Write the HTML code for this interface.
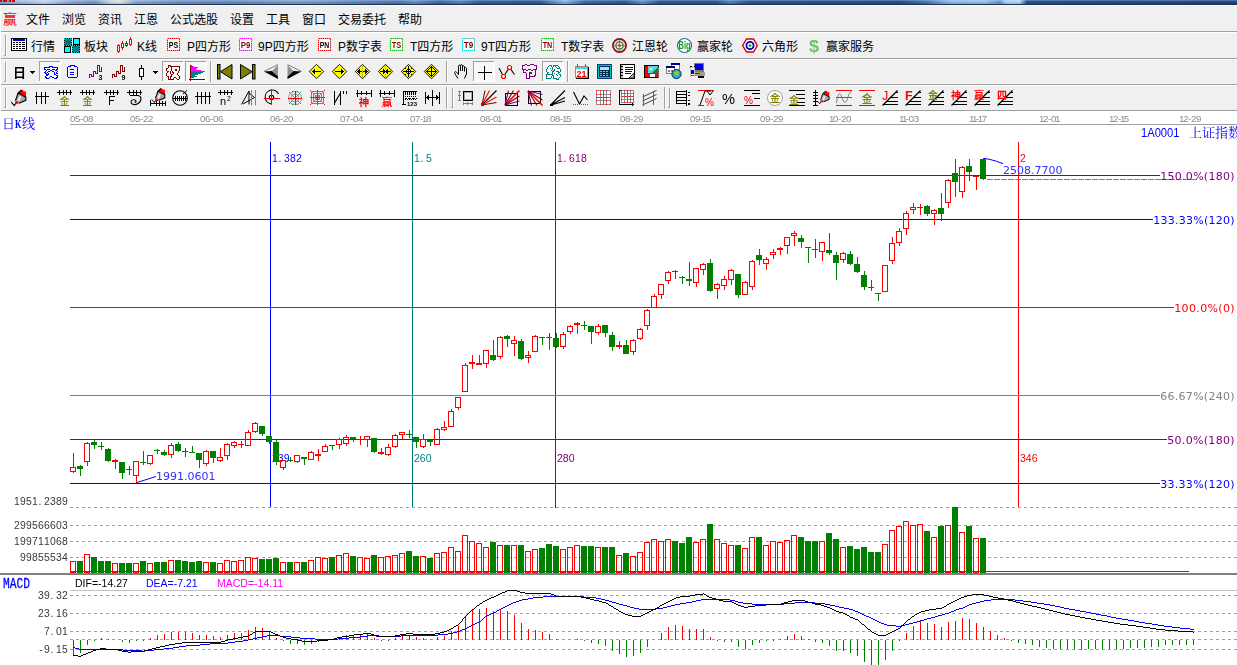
<!DOCTYPE html><html><head><meta charset="utf-8"><title>赢家江恩 - 上证指数 日K线</title>
<style>
html,body{margin:0;padding:0;background:#fff}
body{width:1237px;height:665px;overflow:hidden;position:relative;font-family:'Liberation Sans','Noto Sans CJK SC',sans-serif;font-size:12px;color:#000}
#strip{position:absolute;left:0;top:0;width:1237px;height:4px;background:linear-gradient(180deg,rgba(255,255,255,.35) 0,rgba(255,255,255,.12) 1px,rgba(255,255,255,0) 2px,rgba(0,0,30,.12) 4px),linear-gradient(90deg,#86a3cf 0px,#a9c0de 30px,#c3d4e8 45px,#8aa7cf 70px,#7193c4 95px,#c2d6d4 110px,#d5e2da 120px,#86a6cf 135px,#6a8fc3 180px,#6288be 230px,#779bcb 300px,#5a83bb 360px,#4a75b0 400px,#5f8cc4 415px,#35649f 440px,#4f82be 460px,#2c5c9a 480px,#2a5894 540px,#7fb2e4 565px,#3465a3 585px,#28568f 625px,#5a8fc8 642px,#28568f 660px,#265490 715px,#4a7fb9 730px,#255290 750px,#1f4c88 900px,#3a70ae 925px,#86b6e6 950px,#8fbfee 985px,#5d93cc 1000px,#a4cdf2 1006px,#a8d0f4 1020px,#1e4d8c 1027px,#1a4380 1237px)}
#strip2{position:absolute;left:0;top:4px;width:1237px;height:1px;background:#22304f}
#stripred{position:absolute;left:0;top:0;width:15px;height:2px;background:repeating-linear-gradient(90deg,#e00000 0 2px,#7f9fcf 2px 3px,#e00000 3px 7px,#7f9fcf 7px 9px)}
#menubar{position:absolute;left:0;top:5px;width:1237px;height:26px;background:#f0f0f0;border-top:1px solid #fcfcfc;box-sizing:border-box}
.tbrow{position:absolute;left:0;width:1237px;background:#f0f0f0;border-top:1px solid #a0a0a0;box-sizing:border-box;box-shadow:inset 0 1px 0 #fff}
.lbl{position:absolute;white-space:nowrap;line-height:14px;height:14px}
#logo{position:absolute;left:3px;top:9px;font-family:'Liberation Sans','Noto Sans CJK SC',sans-serif;font-size:14px;line-height:18px;color:#f2000c}
#chart,#ui{will-change:transform}
#leftedge{position:absolute;left:0;top:5px;width:1px;height:106px;background:#fff}
</style></head><body>
<div id="strip"></div><div id="stripred"></div><div id="strip2"></div>
<div id="menubar"><span id="logo" style="top:4px">赢</span>
<span class="lbl" style="left:26px;top:7px">文件</span>
<span class="lbl" style="left:62px;top:7px">浏览</span>
<span class="lbl" style="left:98px;top:7px">资讯</span>
<span class="lbl" style="left:134px;top:7px">江恩</span>
<span class="lbl" style="left:170px;top:7px">公式选股</span>
<span class="lbl" style="left:230px;top:7px">设置</span>
<span class="lbl" style="left:266px;top:7px">工具</span>
<span class="lbl" style="left:302px;top:7px">窗口</span>
<span class="lbl" style="left:338px;top:7px">交易委托</span>
<span class="lbl" style="left:398px;top:7px">帮助</span>
</div>
<div class="tbrow" style="top:31px;height:27px">
<span class="lbl" style="left:31px;top:8px">行情</span>
<span class="lbl" style="left:84px;top:8px">板块</span>
<span class="lbl" style="left:137px;top:8px">K线</span>
<span class="lbl" style="left:187px;top:8px">P四方形</span>
<span class="lbl" style="left:258px;top:8px">9P四方形</span>
<span class="lbl" style="left:338px;top:8px">P数字表</span>
<span class="lbl" style="left:410px;top:8px">T四方形</span>
<span class="lbl" style="left:481px;top:8px">9T四方形</span>
<span class="lbl" style="left:561px;top:8px">T数字表</span>
<span class="lbl" style="left:632px;top:8px">江恩轮</span>
<span class="lbl" style="left:697px;top:8px">赢家轮</span>
<span class="lbl" style="left:762px;top:8px">六角形</span>
<span class="lbl" style="left:826px;top:8px">赢家服务</span>
</div>
<div class="tbrow" style="top:58px;height:26px"></div>
<div class="tbrow" style="top:84px;height:26px"></div>
<div class="tbrow" style="top:110px;height:1px;background:#a0a0a0;box-shadow:none"></div>
<div id="leftedge"></div>
<svg id="chart" width="1237" height="665" viewBox="0 0 1237 665" style="position:absolute;left:0;top:0" shape-rendering="crispEdges">
<rect x="0" y="111" width="1237" height="554" fill="#fff"/>
<rect x="70" y="124" width="1167" height="1" fill="#a0a0a0"/>
<g font-family="'Liberation Sans',sans-serif" font-size="9.7px" fill="#8c8c8c" shape-rendering="auto">
<text x="70.0 75.0 80.0 83.0 88.0" y="122">05-08</text>
<text x="130.0 135.0 140.0 143.0 148.0" y="122">05-22</text>
<text x="200.0 205.0 210.0 213.0 218.0" y="122">06-06</text>
<text x="270.0 275.0 280.0 283.0 288.0" y="122">06-20</text>
<text x="340.0 345.0 350.0 353.0 358.0" y="122">07-04</text>
<text x="410.0 415.0 420.0 422.0 425.9" y="122">07-18</text>
<text x="480.0 485.0 490.0 493.0 497.0" y="122">08-01</text>
<text x="550.0 555.0 560.0 562.0 565.9" y="122">08-15</text>
<text x="620.0 625.0 630.0 633.0 638.0" y="122">08-29</text>
<text x="690.0 695.0 700.0 702.0 705.9" y="122">09-15</text>
<text x="760.0 765.0 770.0 773.0 778.0" y="122">09-29</text>
<text x="829.0 832.9 837.9 840.9 845.9" y="122">10-20</text>
<text x="899.0 901.9 905.8 908.8 913.8" y="122">11-03</text>
<text x="969.0 971.9 975.8 977.8 981.7" y="122">11-17</text>
<text x="1039.0 1042.9 1047.9 1050.9 1054.9" y="122">12-01</text>
<text x="1109.0 1112.9 1117.9 1119.9 1123.8" y="122">12-15</text>
<text x="1179.0 1182.9 1187.9 1190.9 1195.9" y="122">12-29</text>
</g>
<rect x="270" y="142" width="1" height="366" fill="#0000ff"/>
<rect x="412" y="142" width="1" height="366" fill="#008080"/>
<rect x="555" y="142" width="1" height="366" fill="#800080"/>
<rect x="1018" y="142" width="1" height="366" fill="#ff0000"/>
<rect x="70" y="175" width="1090" height="1" fill="#800080"/>
<rect x="70" y="219" width="1083" height="1" fill="#0000ff"/>
<rect x="70" y="307" width="1104" height="1" fill="#ff0000"/>
<rect x="70" y="395" width="1090" height="1" fill="#808080"/>
<rect x="70" y="439" width="1097" height="1" fill="#800080"/>
<rect x="70" y="483" width="1090" height="1" fill="#0000ff"/>
<line x1="987" y1="179.5" x2="1196" y2="179.5" stroke="#808080" stroke-dasharray="6 1"/>
<line x1="70" y1="507.5" x2="1237" y2="507.5" stroke="#a0a0a0" stroke-dasharray="3 3"/>
<line x1="70" y1="525.5" x2="1237" y2="525.5" stroke="#a0a0a0" stroke-dasharray="3 3"/>
<line x1="70" y1="541.5" x2="1237" y2="541.5" stroke="#a0a0a0" stroke-dasharray="3 3"/>
<line x1="70" y1="557.5" x2="1237" y2="557.5" stroke="#a0a0a0" stroke-dasharray="3 3"/>
<g shape-rendering="auto">
<text x="272.1 278.6 284.1 290.1 296.1" y="162" font-family="'Liberation Sans','Noto Serif CJK SC',sans-serif" font-size="10.4px" fill="#0000ff">1.382</text>
<text x="414.1 420.6 426.1" y="162" font-family="'Liberation Sans','Noto Serif CJK SC',sans-serif" font-size="10.4px" fill="#008080">1.5</text>
<text x="557.1 563.6 569.1 575.1 581.1" y="162" font-family="'Liberation Sans','Noto Serif CJK SC',sans-serif" font-size="10.4px" fill="#800080">1.618</text>
<g font-family="'Liberation Sans',sans-serif" font-size="10.5px">
<text x="1020" y="162" fill="#ff0000">2</text>
<text x="272" y="462" fill="#0000ff">239</text>
<text x="414" y="462" fill="#008080">260</text>
<text x="557" y="462" fill="#800080">280</text>
<text x="1020" y="462" fill="#ff0000">346</text>
</g>
<g font-family="'DejaVu Sans','Liberation Sans',sans-serif" font-size="11px">
<text x="1160.2" y="179.6" fill="#800080" textLength="74.4" lengthAdjust="spacing">150.0%(180)</text>
<text x="1153.2" y="223.6" fill="#0000ff" textLength="81.4" lengthAdjust="spacing">133.33%(120)</text>
<text x="1174.2" y="311.6" fill="#ff0000" textLength="60.4" lengthAdjust="spacing">100.0%(0)</text>
<text x="1160.2" y="399.6" fill="#808080" textLength="74.4" lengthAdjust="spacing">66.67%(240)</text>
<text x="1167.2" y="443.6" fill="#800080" textLength="67.4" lengthAdjust="spacing">50.0%(180)</text>
<text x="1160.2" y="487.6" fill="#0000ff" textLength="74.4" lengthAdjust="spacing">33.33%(120)</text>
</g>
<g font-family="'DejaVu Sans','Liberation Sans',sans-serif" font-size="11px" fill="#3030ff">
<text x="1003" y="173.6">2508.7700</text>
<text x="156" y="480">1991.0601</text>
</g>
<path d="M983.5 158.4 L989 159.2 L996.6 161.3 L1003 163.6" fill="none" stroke="#0000ff" stroke-width="1"/>
<path d="M137 482.5 L156 476.5" fill="none" stroke="#0000ff" stroke-width="1"/>
</g>
<g shape-rendering="auto">
<text x="2 22" y="128.3" font-family="'Liberation Serif','Noto Serif CJK SC',serif" font-size="13px" fill="#0000ff">日线</text>
<text x="15" y="128" font-family="'Liberation Serif',serif" font-size="12.5px" font-weight="bold" fill="#0000ff" textLength="6.4" lengthAdjust="spacingAndGlyphs">K</text>
<text x="1141" y="137" font-family="'Liberation Sans',sans-serif" font-size="13.5px" fill="#0000ff" textLength="38.5" lengthAdjust="spacingAndGlyphs">1A0001</text>
<text x="1189 1202 1215 1228" y="137" font-family="'Liberation Serif','Noto Serif CJK SC',serif" font-size="13px" fill="#0000ff">上证指数</text>
</g>
<rect x="73" y="453" width="1" height="14" fill="#ff0000"/>
<rect x="73" y="472" width="1" height="1" fill="#ff0000"/>
<rect x="70.5" y="467.5" width="5" height="4" fill="none" stroke="#ff0000"/>
<rect x="80" y="465" width="1" height="11" fill="#008000"/>
<rect x="77" y="466" width="6" height="3" fill="#008000"/>
<rect x="87" y="442" width="1" height="1" fill="#ff0000"/>
<rect x="87" y="462" width="1" height="4" fill="#ff0000"/>
<rect x="84.5" y="443.5" width="5" height="18" fill="none" stroke="#ff0000"/>
<rect x="94" y="439" width="1" height="10" fill="#008000"/>
<rect x="91" y="442" width="6" height="3" fill="#008000"/>
<rect x="101" y="442" width="1" height="8" fill="#008000"/>
<rect x="98" y="446" width="6" height="1" fill="#008000"/>
<rect x="108" y="448" width="1" height="14" fill="#008000"/>
<rect x="105" y="449" width="6" height="12" fill="#008000"/>
<rect x="115" y="459" width="1" height="10" fill="#ff0000"/>
<rect x="112" y="460" width="6" height="2" fill="#ff0000"/>
<rect x="122" y="462" width="1" height="17" fill="#008000"/>
<rect x="119" y="462" width="6" height="11" fill="#008000"/>
<rect x="129" y="466" width="1" height="9" fill="#008000"/>
<rect x="126" y="469" width="6" height="1" fill="#008000"/>
<rect x="136" y="476" width="1" height="7" fill="#ff0000"/>
<rect x="133.5" y="461.5" width="5" height="14" fill="none" stroke="#ff0000"/>
<rect x="143" y="451" width="1" height="14" fill="#008000"/>
<rect x="140" y="462" width="6" height="1" fill="#008000"/>
<rect x="150" y="464" width="1" height="1" fill="#ff0000"/>
<rect x="147.5" y="455.5" width="5" height="8" fill="none" stroke="#ff0000"/>
<rect x="157" y="449" width="1" height="5" fill="#008000"/>
<rect x="154" y="450" width="6" height="1" fill="#008000"/>
<rect x="164" y="450" width="1" height="6" fill="#008000"/>
<rect x="161" y="452" width="6" height="3" fill="#008000"/>
<rect x="171" y="443" width="1" height="2" fill="#ff0000"/>
<rect x="171" y="455" width="1" height="3" fill="#ff0000"/>
<rect x="168.5" y="445.5" width="5" height="9" fill="none" stroke="#ff0000"/>
<rect x="178" y="442" width="1" height="10" fill="#008000"/>
<rect x="175" y="444" width="6" height="7" fill="#008000"/>
<rect x="185" y="448" width="1" height="9" fill="#008000"/>
<rect x="182" y="451" width="6" height="1" fill="#008000"/>
<rect x="192" y="446" width="1" height="7" fill="#008000"/>
<rect x="189" y="452" width="6" height="1" fill="#008000"/>
<rect x="199" y="453" width="1" height="15" fill="#008000"/>
<rect x="196" y="453" width="6" height="7" fill="#008000"/>
<rect x="206" y="450" width="1" height="1" fill="#ff0000"/>
<rect x="206" y="464" width="1" height="2" fill="#ff0000"/>
<rect x="203.5" y="451.5" width="5" height="12" fill="none" stroke="#ff0000"/>
<rect x="213" y="451" width="1" height="12" fill="#008000"/>
<rect x="210" y="451" width="6" height="7" fill="#008000"/>
<rect x="220" y="448" width="1" height="9" fill="#ff0000"/>
<rect x="220" y="461" width="1" height="1" fill="#ff0000"/>
<rect x="217.5" y="457.5" width="5" height="3" fill="none" stroke="#ff0000"/>
<rect x="227" y="443" width="1" height="1" fill="#ff0000"/>
<rect x="227" y="456" width="1" height="4" fill="#ff0000"/>
<rect x="224.5" y="444.5" width="5" height="11" fill="none" stroke="#ff0000"/>
<rect x="234" y="441" width="1" height="1" fill="#ff0000"/>
<rect x="234" y="446" width="1" height="2" fill="#ff0000"/>
<rect x="231.5" y="442.5" width="5" height="3" fill="none" stroke="#ff0000"/>
<rect x="241" y="441" width="1" height="7" fill="#ff0000"/>
<rect x="238" y="444" width="6" height="1" fill="#ff0000"/>
<rect x="248" y="430" width="1" height="2" fill="#ff0000"/>
<rect x="245.5" y="432.5" width="5" height="13" fill="none" stroke="#ff0000"/>
<rect x="255" y="422" width="1" height="1" fill="#ff0000"/>
<rect x="255" y="432" width="1" height="1" fill="#ff0000"/>
<rect x="252.5" y="423.5" width="5" height="8" fill="none" stroke="#ff0000"/>
<rect x="262" y="426" width="1" height="10" fill="#008000"/>
<rect x="259" y="426" width="6" height="8" fill="#008000"/>
<rect x="269" y="436" width="1" height="8" fill="#008000"/>
<rect x="266" y="436" width="6" height="6" fill="#008000"/>
<rect x="276" y="440" width="1" height="25" fill="#008000"/>
<rect x="273" y="442" width="6" height="20" fill="#008000"/>
<rect x="283" y="468" width="1" height="2" fill="#ff0000"/>
<rect x="280.5" y="460.5" width="5" height="7" fill="none" stroke="#ff0000"/>
<rect x="290" y="457" width="1" height="5" fill="#008000"/>
<rect x="287" y="460" width="6" height="1" fill="#008000"/>
<rect x="297" y="462" width="1" height="1" fill="#ff0000"/>
<rect x="294.5" y="455.5" width="5" height="6" fill="none" stroke="#ff0000"/>
<rect x="304" y="457" width="1" height="8" fill="#008000"/>
<rect x="301" y="457" width="6" height="2" fill="#008000"/>
<rect x="311" y="451" width="1" height="1" fill="#ff0000"/>
<rect x="308.5" y="452.5" width="5" height="7" fill="none" stroke="#ff0000"/>
<rect x="318" y="449" width="1" height="12" fill="#ff0000"/>
<rect x="315" y="454" width="6" height="2" fill="#ff0000"/>
<rect x="325" y="444" width="1" height="2" fill="#ff0000"/>
<rect x="322.5" y="446.5" width="5" height="5" fill="none" stroke="#ff0000"/>
<rect x="332" y="445" width="1" height="5" fill="#008000"/>
<rect x="329" y="445" width="6" height="1" fill="#008000"/>
<rect x="339" y="438" width="1" height="1" fill="#ff0000"/>
<rect x="339" y="445" width="1" height="4" fill="#ff0000"/>
<rect x="336.5" y="439.5" width="5" height="5" fill="none" stroke="#ff0000"/>
<rect x="346" y="435" width="1" height="2" fill="#ff0000"/>
<rect x="346" y="444" width="1" height="2" fill="#ff0000"/>
<rect x="343.5" y="437.5" width="5" height="6" fill="none" stroke="#ff0000"/>
<rect x="353" y="437" width="1" height="5" fill="#008000"/>
<rect x="350" y="437" width="6" height="2" fill="#008000"/>
<rect x="360" y="436" width="1" height="9" fill="#ff0000"/>
<rect x="357" y="439" width="6" height="1" fill="#ff0000"/>
<rect x="367" y="440" width="1" height="7" fill="#ff0000"/>
<rect x="364.5" y="436.5" width="5" height="3" fill="none" stroke="#ff0000"/>
<rect x="374" y="438" width="1" height="15" fill="#008000"/>
<rect x="371" y="438" width="6" height="14" fill="#008000"/>
<rect x="381" y="448" width="1" height="7" fill="#ff0000"/>
<rect x="378" y="452" width="6" height="2" fill="#ff0000"/>
<rect x="388" y="444" width="1" height="3" fill="#ff0000"/>
<rect x="388" y="455" width="1" height="1" fill="#ff0000"/>
<rect x="385.5" y="447.5" width="5" height="7" fill="none" stroke="#ff0000"/>
<rect x="395" y="434" width="1" height="1" fill="#ff0000"/>
<rect x="395" y="447" width="1" height="1" fill="#ff0000"/>
<rect x="392.5" y="435.5" width="5" height="11" fill="none" stroke="#ff0000"/>
<rect x="402" y="435" width="1" height="4" fill="#ff0000"/>
<rect x="399.5" y="432.5" width="5" height="2" fill="none" stroke="#ff0000"/>
<rect x="409" y="430" width="1" height="8" fill="#008000"/>
<rect x="406" y="434" width="6" height="1" fill="#008000"/>
<rect x="416" y="437" width="1" height="11" fill="#008000"/>
<rect x="413" y="437" width="6" height="5" fill="#008000"/>
<rect x="423" y="434" width="1" height="5" fill="#ff0000"/>
<rect x="423" y="447" width="1" height="1" fill="#ff0000"/>
<rect x="420.5" y="439.5" width="5" height="7" fill="none" stroke="#ff0000"/>
<rect x="430" y="440" width="1" height="6" fill="#008000"/>
<rect x="427" y="440" width="6" height="2" fill="#008000"/>
<rect x="437" y="428" width="1" height="1" fill="#ff0000"/>
<rect x="434.5" y="429.5" width="5" height="15" fill="none" stroke="#ff0000"/>
<rect x="444" y="421" width="1" height="6" fill="#ff0000"/>
<rect x="444" y="430" width="1" height="1" fill="#ff0000"/>
<rect x="441.5" y="427.5" width="5" height="2" fill="none" stroke="#ff0000"/>
<rect x="451" y="409" width="1" height="2" fill="#ff0000"/>
<rect x="448.5" y="411.5" width="5" height="15" fill="none" stroke="#ff0000"/>
<rect x="458" y="408" width="1" height="2" fill="#ff0000"/>
<rect x="455.5" y="397.5" width="5" height="10" fill="none" stroke="#ff0000"/>
<rect x="465" y="363" width="1" height="2" fill="#ff0000"/>
<rect x="462.5" y="365.5" width="5" height="26" fill="none" stroke="#ff0000"/>
<rect x="472" y="355" width="1" height="14" fill="#ff0000"/>
<rect x="469" y="362" width="6" height="2" fill="#ff0000"/>
<rect x="479" y="355" width="1" height="10" fill="#ff0000"/>
<rect x="476" y="363" width="6" height="2" fill="#ff0000"/>
<rect x="486" y="364" width="1" height="4" fill="#ff0000"/>
<rect x="483.5" y="350.5" width="5" height="13" fill="none" stroke="#ff0000"/>
<rect x="493" y="340" width="1" height="21" fill="#008000"/>
<rect x="490" y="355" width="6" height="5" fill="#008000"/>
<rect x="500" y="336" width="1" height="1" fill="#ff0000"/>
<rect x="500" y="357" width="1" height="2" fill="#ff0000"/>
<rect x="497.5" y="337.5" width="5" height="19" fill="none" stroke="#ff0000"/>
<rect x="507" y="335" width="1" height="12" fill="#008000"/>
<rect x="504" y="336" width="6" height="3" fill="#008000"/>
<rect x="514" y="336" width="1" height="4" fill="#ff0000"/>
<rect x="514" y="344" width="1" height="12" fill="#ff0000"/>
<rect x="511.5" y="340.5" width="5" height="3" fill="none" stroke="#ff0000"/>
<rect x="521" y="339" width="1" height="21" fill="#008000"/>
<rect x="518" y="341" width="6" height="18" fill="#008000"/>
<rect x="528" y="351" width="1" height="4" fill="#ff0000"/>
<rect x="528" y="358" width="1" height="5" fill="#ff0000"/>
<rect x="525.5" y="355.5" width="5" height="2" fill="none" stroke="#ff0000"/>
<rect x="535" y="335" width="1" height="1" fill="#ff0000"/>
<rect x="532.5" y="336.5" width="5" height="15" fill="none" stroke="#ff0000"/>
<rect x="542" y="337" width="1" height="8" fill="#008000"/>
<rect x="539" y="337" width="6" height="1" fill="#008000"/>
<rect x="549" y="333" width="1" height="17" fill="#008000"/>
<rect x="546" y="337" width="6" height="1" fill="#008000"/>
<rect x="556" y="333" width="1" height="15" fill="#008000"/>
<rect x="553" y="338" width="6" height="9" fill="#008000"/>
<rect x="563" y="332" width="1" height="2" fill="#ff0000"/>
<rect x="563" y="347" width="1" height="2" fill="#ff0000"/>
<rect x="560.5" y="334.5" width="5" height="12" fill="none" stroke="#ff0000"/>
<rect x="570" y="325" width="1" height="1" fill="#ff0000"/>
<rect x="570" y="332" width="1" height="2" fill="#ff0000"/>
<rect x="567.5" y="326.5" width="5" height="5" fill="none" stroke="#ff0000"/>
<rect x="577" y="322" width="1" height="12" fill="#ff0000"/>
<rect x="574" y="323" width="6" height="2" fill="#ff0000"/>
<rect x="584" y="321" width="1" height="9" fill="#008000"/>
<rect x="581" y="325" width="6" height="1" fill="#008000"/>
<rect x="591" y="326" width="1" height="18" fill="#008000"/>
<rect x="588" y="326" width="6" height="6" fill="#008000"/>
<rect x="598" y="324" width="1" height="2" fill="#ff0000"/>
<rect x="598" y="333" width="1" height="2" fill="#ff0000"/>
<rect x="595.5" y="326.5" width="5" height="6" fill="none" stroke="#ff0000"/>
<rect x="605" y="325" width="1" height="12" fill="#008000"/>
<rect x="602" y="325" width="6" height="8" fill="#008000"/>
<rect x="612" y="332" width="1" height="19" fill="#008000"/>
<rect x="609" y="335" width="6" height="12" fill="#008000"/>
<rect x="619" y="341" width="1" height="8" fill="#ff0000"/>
<rect x="616" y="345" width="6" height="2" fill="#ff0000"/>
<rect x="626" y="340" width="1" height="14" fill="#008000"/>
<rect x="623" y="345" width="6" height="9" fill="#008000"/>
<rect x="633" y="339" width="1" height="1" fill="#ff0000"/>
<rect x="633" y="352" width="1" height="3" fill="#ff0000"/>
<rect x="630.5" y="340.5" width="5" height="11" fill="none" stroke="#ff0000"/>
<rect x="640" y="328" width="1" height="1" fill="#ff0000"/>
<rect x="640" y="339" width="1" height="1" fill="#ff0000"/>
<rect x="637.5" y="329.5" width="5" height="9" fill="none" stroke="#ff0000"/>
<rect x="647" y="309" width="1" height="1" fill="#ff0000"/>
<rect x="647" y="326" width="1" height="4" fill="#ff0000"/>
<rect x="644.5" y="310.5" width="5" height="15" fill="none" stroke="#ff0000"/>
<rect x="654" y="294" width="1" height="2" fill="#ff0000"/>
<rect x="651.5" y="296.5" width="5" height="11" fill="none" stroke="#ff0000"/>
<rect x="661" y="295" width="1" height="4" fill="#ff0000"/>
<rect x="658.5" y="284.5" width="5" height="10" fill="none" stroke="#ff0000"/>
<rect x="668" y="271" width="1" height="1" fill="#ff0000"/>
<rect x="668" y="281" width="1" height="3" fill="#ff0000"/>
<rect x="665.5" y="272.5" width="5" height="8" fill="none" stroke="#ff0000"/>
<rect x="675" y="270" width="1" height="9" fill="#008000"/>
<rect x="672" y="271" width="6" height="1" fill="#008000"/>
<rect x="682" y="276" width="1" height="8" fill="#008000"/>
<rect x="679" y="277" width="6" height="1" fill="#008000"/>
<rect x="689" y="262" width="1" height="24" fill="#008000"/>
<rect x="686" y="279" width="6" height="2" fill="#008000"/>
<rect x="696" y="283" width="1" height="4" fill="#ff0000"/>
<rect x="693.5" y="268.5" width="5" height="14" fill="none" stroke="#ff0000"/>
<rect x="703" y="263" width="1" height="1" fill="#ff0000"/>
<rect x="703" y="270" width="1" height="5" fill="#ff0000"/>
<rect x="700.5" y="264.5" width="5" height="5" fill="none" stroke="#ff0000"/>
<rect x="710" y="259" width="1" height="33" fill="#008000"/>
<rect x="707" y="263" width="6" height="28" fill="#008000"/>
<rect x="717" y="283" width="1" height="1" fill="#ff0000"/>
<rect x="717" y="289" width="1" height="10" fill="#ff0000"/>
<rect x="714.5" y="284.5" width="5" height="4" fill="none" stroke="#ff0000"/>
<rect x="724" y="276" width="1" height="3" fill="#ff0000"/>
<rect x="724" y="286" width="1" height="4" fill="#ff0000"/>
<rect x="721.5" y="279.5" width="5" height="6" fill="none" stroke="#ff0000"/>
<rect x="731" y="269" width="1" height="1" fill="#ff0000"/>
<rect x="731" y="280" width="1" height="5" fill="#ff0000"/>
<rect x="728.5" y="270.5" width="5" height="9" fill="none" stroke="#ff0000"/>
<rect x="738" y="274" width="1" height="24" fill="#008000"/>
<rect x="735" y="274" width="6" height="21" fill="#008000"/>
<rect x="745" y="281" width="1" height="1" fill="#ff0000"/>
<rect x="742.5" y="282.5" width="5" height="12" fill="none" stroke="#ff0000"/>
<rect x="752" y="260" width="1" height="1" fill="#ff0000"/>
<rect x="752" y="287" width="1" height="3" fill="#ff0000"/>
<rect x="749.5" y="261.5" width="5" height="25" fill="none" stroke="#ff0000"/>
<rect x="759" y="249" width="1" height="16" fill="#008000"/>
<rect x="756" y="255" width="6" height="5" fill="#008000"/>
<rect x="766" y="257" width="1" height="2" fill="#ff0000"/>
<rect x="766" y="264" width="1" height="6" fill="#ff0000"/>
<rect x="763.5" y="259.5" width="5" height="4" fill="none" stroke="#ff0000"/>
<rect x="773" y="249" width="1" height="3" fill="#ff0000"/>
<rect x="773" y="255" width="1" height="4" fill="#ff0000"/>
<rect x="770.5" y="252.5" width="5" height="2" fill="none" stroke="#ff0000"/>
<rect x="780" y="247" width="1" height="8" fill="#ff0000"/>
<rect x="777" y="248" width="6" height="2" fill="#ff0000"/>
<rect x="787" y="246" width="1" height="8" fill="#ff0000"/>
<rect x="784.5" y="237.5" width="5" height="8" fill="none" stroke="#ff0000"/>
<rect x="794" y="231" width="1" height="2" fill="#ff0000"/>
<rect x="794" y="236" width="1" height="10" fill="#ff0000"/>
<rect x="791.5" y="233.5" width="5" height="2" fill="none" stroke="#ff0000"/>
<rect x="801" y="235" width="1" height="13" fill="#008000"/>
<rect x="798" y="238" width="6" height="4" fill="#008000"/>
<rect x="808" y="247" width="1" height="16" fill="#008000"/>
<rect x="805" y="247" width="6" height="1" fill="#008000"/>
<rect x="815" y="239" width="1" height="19" fill="#008000"/>
<rect x="812" y="249" width="6" height="1" fill="#008000"/>
<rect x="822" y="252" width="1" height="9" fill="#ff0000"/>
<rect x="819.5" y="242.5" width="5" height="9" fill="none" stroke="#ff0000"/>
<rect x="829" y="233" width="1" height="22" fill="#008000"/>
<rect x="826" y="250" width="6" height="3" fill="#008000"/>
<rect x="836" y="252" width="1" height="28" fill="#008000"/>
<rect x="833" y="255" width="6" height="8" fill="#008000"/>
<rect x="843" y="252" width="1" height="1" fill="#ff0000"/>
<rect x="843" y="260" width="1" height="3" fill="#ff0000"/>
<rect x="840.5" y="253.5" width="5" height="6" fill="none" stroke="#ff0000"/>
<rect x="850" y="251" width="1" height="14" fill="#008000"/>
<rect x="847" y="254" width="6" height="10" fill="#008000"/>
<rect x="857" y="257" width="1" height="16" fill="#008000"/>
<rect x="854" y="264" width="6" height="8" fill="#008000"/>
<rect x="864" y="271" width="1" height="19" fill="#008000"/>
<rect x="861" y="275" width="6" height="12" fill="#008000"/>
<rect x="871" y="280" width="1" height="11" fill="#008000"/>
<rect x="868" y="287" width="6" height="1" fill="#008000"/>
<rect x="878" y="293" width="1" height="8" fill="#008000"/>
<rect x="875" y="293" width="6" height="1" fill="#008000"/>
<rect x="882.5" y="265.5" width="5" height="26" fill="none" stroke="#ff0000"/>
<rect x="892" y="237" width="1" height="6" fill="#ff0000"/>
<rect x="892" y="261" width="1" height="3" fill="#ff0000"/>
<rect x="889.5" y="243.5" width="5" height="17" fill="none" stroke="#ff0000"/>
<rect x="899" y="228" width="1" height="3" fill="#ff0000"/>
<rect x="899" y="243" width="1" height="3" fill="#ff0000"/>
<rect x="896.5" y="231.5" width="5" height="11" fill="none" stroke="#ff0000"/>
<rect x="906" y="211" width="1" height="2" fill="#ff0000"/>
<rect x="906" y="229" width="1" height="6" fill="#ff0000"/>
<rect x="903.5" y="213.5" width="5" height="15" fill="none" stroke="#ff0000"/>
<rect x="913" y="203" width="1" height="4" fill="#ff0000"/>
<rect x="913" y="210" width="1" height="4" fill="#ff0000"/>
<rect x="910.5" y="207.5" width="5" height="2" fill="none" stroke="#ff0000"/>
<rect x="920" y="204" width="1" height="11" fill="#ff0000"/>
<rect x="917" y="207" width="6" height="1" fill="#ff0000"/>
<rect x="927" y="205" width="1" height="11" fill="#008000"/>
<rect x="924" y="206" width="6" height="8" fill="#008000"/>
<rect x="934" y="209" width="1" height="1" fill="#ff0000"/>
<rect x="934" y="214" width="1" height="11" fill="#ff0000"/>
<rect x="931.5" y="210.5" width="5" height="3" fill="none" stroke="#ff0000"/>
<rect x="941" y="193" width="1" height="28" fill="#008000"/>
<rect x="938" y="208" width="6" height="6" fill="#008000"/>
<rect x="948" y="179" width="1" height="1" fill="#ff0000"/>
<rect x="948" y="203" width="1" height="5" fill="#ff0000"/>
<rect x="945.5" y="180.5" width="5" height="22" fill="none" stroke="#ff0000"/>
<rect x="955" y="159" width="1" height="38" fill="#008000"/>
<rect x="952" y="173" width="6" height="9" fill="#008000"/>
<rect x="962" y="166" width="1" height="1" fill="#ff0000"/>
<rect x="962" y="192" width="1" height="6" fill="#ff0000"/>
<rect x="959.5" y="167.5" width="5" height="24" fill="none" stroke="#ff0000"/>
<rect x="969" y="159" width="1" height="22" fill="#008000"/>
<rect x="966" y="166" width="6" height="6" fill="#008000"/>
<rect x="976" y="175" width="1" height="15" fill="#ff0000"/>
<rect x="973" y="176" width="6" height="1" fill="#ff0000"/>
<rect x="983" y="158" width="1" height="22" fill="#008000"/>
<rect x="980" y="159" width="6" height="20" fill="#008000"/>
<rect x="70" y="571" width="1119" height="1" fill="#ff0000"/>
<rect x="70.5" y="561.5" width="5" height="11" fill="none" stroke="#ff0000"/>
<rect x="77" y="561" width="6" height="12" fill="#008000"/>
<rect x="84.5" y="554.5" width="5" height="18" fill="none" stroke="#ff0000"/>
<rect x="91" y="557" width="6" height="16" fill="#008000"/>
<rect x="98" y="561" width="6" height="12" fill="#008000"/>
<rect x="105" y="561" width="6" height="12" fill="#008000"/>
<rect x="112.5" y="563.5" width="5" height="9" fill="none" stroke="#ff0000"/>
<rect x="119" y="563" width="6" height="10" fill="#008000"/>
<rect x="126" y="563" width="6" height="10" fill="#008000"/>
<rect x="133.5" y="563.5" width="5" height="9" fill="none" stroke="#ff0000"/>
<rect x="140" y="561" width="6" height="12" fill="#008000"/>
<rect x="147.5" y="563.5" width="5" height="9" fill="none" stroke="#ff0000"/>
<rect x="154" y="562" width="6" height="11" fill="#008000"/>
<rect x="161" y="562" width="6" height="11" fill="#008000"/>
<rect x="168.5" y="560.5" width="5" height="12" fill="none" stroke="#ff0000"/>
<rect x="175" y="560" width="6" height="13" fill="#008000"/>
<rect x="182" y="561" width="6" height="12" fill="#008000"/>
<rect x="189" y="562" width="6" height="11" fill="#008000"/>
<rect x="196" y="561" width="6" height="12" fill="#008000"/>
<rect x="203.5" y="562.5" width="5" height="10" fill="none" stroke="#ff0000"/>
<rect x="210" y="562" width="6" height="11" fill="#008000"/>
<rect x="217.5" y="563.5" width="5" height="9" fill="none" stroke="#ff0000"/>
<rect x="224.5" y="560.5" width="5" height="12" fill="none" stroke="#ff0000"/>
<rect x="231.5" y="561.5" width="5" height="11" fill="none" stroke="#ff0000"/>
<rect x="238.5" y="560.5" width="5" height="12" fill="none" stroke="#ff0000"/>
<rect x="245.5" y="557.5" width="5" height="15" fill="none" stroke="#ff0000"/>
<rect x="252.5" y="558.5" width="5" height="14" fill="none" stroke="#ff0000"/>
<rect x="259" y="559" width="6" height="14" fill="#008000"/>
<rect x="266" y="559" width="6" height="14" fill="#008000"/>
<rect x="273" y="558" width="6" height="15" fill="#008000"/>
<rect x="280.5" y="562.5" width="5" height="10" fill="none" stroke="#ff0000"/>
<rect x="287" y="562" width="6" height="11" fill="#008000"/>
<rect x="294.5" y="562.5" width="5" height="10" fill="none" stroke="#ff0000"/>
<rect x="301" y="562" width="6" height="11" fill="#008000"/>
<rect x="308.5" y="560.5" width="5" height="12" fill="none" stroke="#ff0000"/>
<rect x="315.5" y="557.5" width="5" height="15" fill="none" stroke="#ff0000"/>
<rect x="322.5" y="558.5" width="5" height="14" fill="none" stroke="#ff0000"/>
<rect x="329" y="557" width="6" height="16" fill="#008000"/>
<rect x="336.5" y="555.5" width="5" height="17" fill="none" stroke="#ff0000"/>
<rect x="343.5" y="553.5" width="5" height="19" fill="none" stroke="#ff0000"/>
<rect x="350" y="556" width="6" height="17" fill="#008000"/>
<rect x="357.5" y="557.5" width="5" height="15" fill="none" stroke="#ff0000"/>
<rect x="364.5" y="558.5" width="5" height="14" fill="none" stroke="#ff0000"/>
<rect x="371" y="555" width="6" height="18" fill="#008000"/>
<rect x="378.5" y="557.5" width="5" height="15" fill="none" stroke="#ff0000"/>
<rect x="385.5" y="556.5" width="5" height="16" fill="none" stroke="#ff0000"/>
<rect x="392.5" y="555.5" width="5" height="17" fill="none" stroke="#ff0000"/>
<rect x="399.5" y="553.5" width="5" height="19" fill="none" stroke="#ff0000"/>
<rect x="406" y="551" width="6" height="22" fill="#008000"/>
<rect x="413" y="556" width="6" height="17" fill="#008000"/>
<rect x="420.5" y="556.5" width="5" height="16" fill="none" stroke="#ff0000"/>
<rect x="427" y="558" width="6" height="15" fill="#008000"/>
<rect x="434.5" y="553.5" width="5" height="19" fill="none" stroke="#ff0000"/>
<rect x="441.5" y="552.5" width="5" height="20" fill="none" stroke="#ff0000"/>
<rect x="448.5" y="547.5" width="5" height="25" fill="none" stroke="#ff0000"/>
<rect x="455.5" y="551.5" width="5" height="21" fill="none" stroke="#ff0000"/>
<rect x="462.5" y="535.5" width="5" height="37" fill="none" stroke="#ff0000"/>
<rect x="469.5" y="541.5" width="5" height="31" fill="none" stroke="#ff0000"/>
<rect x="476.5" y="543.5" width="5" height="29" fill="none" stroke="#ff0000"/>
<rect x="483.5" y="547.5" width="5" height="25" fill="none" stroke="#ff0000"/>
<rect x="490" y="542" width="6" height="31" fill="#008000"/>
<rect x="497.5" y="545.5" width="5" height="27" fill="none" stroke="#ff0000"/>
<rect x="504" y="545" width="6" height="28" fill="#008000"/>
<rect x="511.5" y="545.5" width="5" height="27" fill="none" stroke="#ff0000"/>
<rect x="518" y="545" width="6" height="28" fill="#008000"/>
<rect x="525.5" y="551.5" width="5" height="21" fill="none" stroke="#ff0000"/>
<rect x="532.5" y="549.5" width="5" height="23" fill="none" stroke="#ff0000"/>
<rect x="539" y="548" width="6" height="25" fill="#008000"/>
<rect x="546" y="544" width="6" height="29" fill="#008000"/>
<rect x="553" y="546" width="6" height="27" fill="#008000"/>
<rect x="560.5" y="549.5" width="5" height="23" fill="none" stroke="#ff0000"/>
<rect x="567.5" y="547.5" width="5" height="25" fill="none" stroke="#ff0000"/>
<rect x="574.5" y="545.5" width="5" height="27" fill="none" stroke="#ff0000"/>
<rect x="581" y="546" width="6" height="27" fill="#008000"/>
<rect x="588" y="546" width="6" height="27" fill="#008000"/>
<rect x="595.5" y="547.5" width="5" height="25" fill="none" stroke="#ff0000"/>
<rect x="602" y="547" width="6" height="26" fill="#008000"/>
<rect x="609" y="547" width="6" height="26" fill="#008000"/>
<rect x="616.5" y="555.5" width="5" height="17" fill="none" stroke="#ff0000"/>
<rect x="623" y="553" width="6" height="20" fill="#008000"/>
<rect x="630.5" y="556.5" width="5" height="16" fill="none" stroke="#ff0000"/>
<rect x="637.5" y="552.5" width="5" height="20" fill="none" stroke="#ff0000"/>
<rect x="644.5" y="542.5" width="5" height="30" fill="none" stroke="#ff0000"/>
<rect x="651.5" y="539.5" width="5" height="33" fill="none" stroke="#ff0000"/>
<rect x="658.5" y="541.5" width="5" height="31" fill="none" stroke="#ff0000"/>
<rect x="665.5" y="539.5" width="5" height="33" fill="none" stroke="#ff0000"/>
<rect x="672" y="541" width="6" height="32" fill="#008000"/>
<rect x="679" y="543" width="6" height="30" fill="#008000"/>
<rect x="686" y="537" width="6" height="36" fill="#008000"/>
<rect x="693.5" y="542.5" width="5" height="30" fill="none" stroke="#ff0000"/>
<rect x="700.5" y="539.5" width="5" height="33" fill="none" stroke="#ff0000"/>
<rect x="707" y="524" width="6" height="49" fill="#008000"/>
<rect x="714.5" y="539.5" width="5" height="33" fill="none" stroke="#ff0000"/>
<rect x="721.5" y="543.5" width="5" height="29" fill="none" stroke="#ff0000"/>
<rect x="728.5" y="545.5" width="5" height="27" fill="none" stroke="#ff0000"/>
<rect x="735" y="545" width="6" height="28" fill="#008000"/>
<rect x="742.5" y="548.5" width="5" height="24" fill="none" stroke="#ff0000"/>
<rect x="749.5" y="537.5" width="5" height="35" fill="none" stroke="#ff0000"/>
<rect x="756" y="537" width="6" height="36" fill="#008000"/>
<rect x="763.5" y="545.5" width="5" height="27" fill="none" stroke="#ff0000"/>
<rect x="770.5" y="541.5" width="5" height="31" fill="none" stroke="#ff0000"/>
<rect x="777.5" y="542.5" width="5" height="30" fill="none" stroke="#ff0000"/>
<rect x="784.5" y="540.5" width="5" height="32" fill="none" stroke="#ff0000"/>
<rect x="791.5" y="535.5" width="5" height="37" fill="none" stroke="#ff0000"/>
<rect x="798" y="537" width="6" height="36" fill="#008000"/>
<rect x="805" y="541" width="6" height="32" fill="#008000"/>
<rect x="812" y="541" width="6" height="32" fill="#008000"/>
<rect x="819.5" y="541.5" width="5" height="31" fill="none" stroke="#ff0000"/>
<rect x="826" y="533" width="6" height="40" fill="#008000"/>
<rect x="833" y="539" width="6" height="34" fill="#008000"/>
<rect x="840.5" y="547.5" width="5" height="25" fill="none" stroke="#ff0000"/>
<rect x="847" y="546" width="6" height="27" fill="#008000"/>
<rect x="854" y="549" width="6" height="24" fill="#008000"/>
<rect x="861" y="547" width="6" height="26" fill="#008000"/>
<rect x="868" y="552" width="6" height="21" fill="#008000"/>
<rect x="875" y="552" width="6" height="21" fill="#008000"/>
<rect x="882.5" y="544.5" width="5" height="28" fill="none" stroke="#ff0000"/>
<rect x="889.5" y="530.5" width="5" height="42" fill="none" stroke="#ff0000"/>
<rect x="896.5" y="526.5" width="5" height="46" fill="none" stroke="#ff0000"/>
<rect x="903.5" y="521.5" width="5" height="51" fill="none" stroke="#ff0000"/>
<rect x="910.5" y="525.5" width="5" height="47" fill="none" stroke="#ff0000"/>
<rect x="917.5" y="524.5" width="5" height="48" fill="none" stroke="#ff0000"/>
<rect x="924" y="531" width="6" height="42" fill="#008000"/>
<rect x="931.5" y="537.5" width="5" height="35" fill="none" stroke="#ff0000"/>
<rect x="938" y="526" width="6" height="47" fill="#008000"/>
<rect x="945.5" y="525.5" width="5" height="47" fill="none" stroke="#ff0000"/>
<rect x="952" y="507" width="6" height="66" fill="#008000"/>
<rect x="959.5" y="532.5" width="5" height="40" fill="none" stroke="#ff0000"/>
<rect x="966" y="526" width="6" height="47" fill="#008000"/>
<rect x="973.5" y="538.5" width="5" height="34" fill="none" stroke="#ff0000"/>
<rect x="980" y="538" width="6" height="35" fill="#008000"/>
<rect x="0" y="573" width="1237" height="2" fill="#808080"/>
<g shape-rendering="auto">
<text x="14.1 20.1 26.1 32.1 38.6 44.1 50.1 56.1 62.1" y="505" font-family="'Liberation Sans','Noto Serif CJK SC',sans-serif" font-size="10.4px" fill="#383838">1951.2389</text>
<text x="14.1 20.1 26.1 32.1 38.1 44.1 50.1 56.1 62.1" y="529" font-family="'Liberation Sans','Noto Serif CJK SC',sans-serif" font-size="10.4px" fill="#383838">299566603</text>
<text x="14.1 20.1 26.1 32.1 38.1 44.1 50.1 56.1 62.1" y="545" font-family="'Liberation Sans','Noto Serif CJK SC',sans-serif" font-size="10.4px" fill="#383838">199711068</text>
<text x="20.1 26.1 32.1 38.1 44.1 50.1 56.1 62.1" y="561" font-family="'Liberation Sans','Noto Serif CJK SC',sans-serif" font-size="10.4px" fill="#383838">99855534</text>
</g>
<rect x="70" y="590" width="1167" height="1" fill="#c0c0c0"/>
<line x1="70" y1="595.5" x2="1237" y2="595.5" stroke="#a0a0a0" stroke-dasharray="3 3"/>
<line x1="70" y1="613.5" x2="1237" y2="613.5" stroke="#a0a0a0" stroke-dasharray="3 3"/>
<line x1="70" y1="631.5" x2="1237" y2="631.5" stroke="#a0a0a0" stroke-dasharray="3 3"/>
<line x1="70" y1="639.5" x2="1237" y2="639.5" stroke="#a0a0a0" stroke-dasharray="3 3"/>
<line x1="70" y1="649.5" x2="1237" y2="649.5" stroke="#a0a0a0" stroke-dasharray="3 3"/>
<rect x="73" y="640" width="1" height="15" fill="#008000"/>
<rect x="80" y="640" width="1" height="13" fill="#008000"/>
<rect x="87" y="640" width="1" height="5" fill="#008000"/>
<rect x="94" y="640" width="1" height="1" fill="#008000"/>
<rect x="101" y="638" width="1" height="2" fill="#ff0000"/>
<rect x="108" y="639" width="1" height="1" fill="#ff0000"/>
<rect x="122" y="640" width="1" height="2" fill="#008000"/>
<rect x="129" y="640" width="1" height="3" fill="#008000"/>
<rect x="136" y="640" width="1" height="1" fill="#008000"/>
<rect x="143" y="640" width="1" height="1" fill="#008000"/>
<rect x="150" y="638" width="1" height="2" fill="#ff0000"/>
<rect x="157" y="635" width="1" height="5" fill="#ff0000"/>
<rect x="164" y="634" width="1" height="6" fill="#ff0000"/>
<rect x="171" y="632" width="1" height="8" fill="#ff0000"/>
<rect x="178" y="632" width="1" height="8" fill="#ff0000"/>
<rect x="185" y="632" width="1" height="8" fill="#ff0000"/>
<rect x="192" y="633" width="1" height="7" fill="#ff0000"/>
<rect x="199" y="635" width="1" height="5" fill="#ff0000"/>
<rect x="206" y="635" width="1" height="5" fill="#ff0000"/>
<rect x="213" y="636" width="1" height="4" fill="#ff0000"/>
<rect x="220" y="637" width="1" height="3" fill="#ff0000"/>
<rect x="227" y="635" width="1" height="5" fill="#ff0000"/>
<rect x="234" y="633" width="1" height="7" fill="#ff0000"/>
<rect x="241" y="633" width="1" height="7" fill="#ff0000"/>
<rect x="248" y="630" width="1" height="10" fill="#ff0000"/>
<rect x="255" y="627" width="1" height="13" fill="#ff0000"/>
<rect x="262" y="628" width="1" height="12" fill="#ff0000"/>
<rect x="269" y="631" width="1" height="9" fill="#ff0000"/>
<rect x="276" y="638" width="1" height="2" fill="#ff0000"/>
<rect x="283" y="640" width="1" height="1" fill="#008000"/>
<rect x="290" y="640" width="1" height="4" fill="#008000"/>
<rect x="297" y="640" width="1" height="4" fill="#008000"/>
<rect x="304" y="640" width="1" height="5" fill="#008000"/>
<rect x="311" y="640" width="1" height="4" fill="#008000"/>
<rect x="318" y="640" width="1" height="2" fill="#008000"/>
<rect x="325" y="640" width="1" height="1" fill="#008000"/>
<rect x="339" y="637" width="1" height="3" fill="#ff0000"/>
<rect x="346" y="635" width="1" height="5" fill="#ff0000"/>
<rect x="353" y="635" width="1" height="5" fill="#ff0000"/>
<rect x="360" y="635" width="1" height="5" fill="#ff0000"/>
<rect x="367" y="634" width="1" height="6" fill="#ff0000"/>
<rect x="374" y="638" width="1" height="2" fill="#ff0000"/>
<rect x="381" y="640" width="1" height="1" fill="#008000"/>
<rect x="388" y="640" width="1" height="1" fill="#008000"/>
<rect x="395" y="638" width="1" height="2" fill="#ff0000"/>
<rect x="402" y="636" width="1" height="4" fill="#ff0000"/>
<rect x="409" y="636" width="1" height="4" fill="#ff0000"/>
<rect x="416" y="637" width="1" height="3" fill="#ff0000"/>
<rect x="423" y="638" width="1" height="2" fill="#ff0000"/>
<rect x="430" y="639" width="1" height="1" fill="#ff0000"/>
<rect x="437" y="637" width="1" height="3" fill="#ff0000"/>
<rect x="444" y="636" width="1" height="4" fill="#ff0000"/>
<rect x="451" y="631" width="1" height="9" fill="#ff0000"/>
<rect x="458" y="626" width="1" height="14" fill="#ff0000"/>
<rect x="465" y="616" width="1" height="24" fill="#ff0000"/>
<rect x="472" y="610" width="1" height="30" fill="#ff0000"/>
<rect x="479" y="609" width="1" height="31" fill="#ff0000"/>
<rect x="486" y="608" width="1" height="32" fill="#ff0000"/>
<rect x="493" y="611" width="1" height="29" fill="#ff0000"/>
<rect x="500" y="610" width="1" height="30" fill="#ff0000"/>
<rect x="507" y="611" width="1" height="29" fill="#ff0000"/>
<rect x="514" y="615" width="1" height="25" fill="#ff0000"/>
<rect x="521" y="623" width="1" height="17" fill="#ff0000"/>
<rect x="528" y="629" width="1" height="11" fill="#ff0000"/>
<rect x="535" y="630" width="1" height="10" fill="#ff0000"/>
<rect x="542" y="632" width="1" height="8" fill="#ff0000"/>
<rect x="549" y="634" width="1" height="6" fill="#ff0000"/>
<rect x="556" y="639" width="1" height="1" fill="#ff0000"/>
<rect x="577" y="639" width="1" height="1" fill="#ff0000"/>
<rect x="584" y="640" width="1" height="1" fill="#008000"/>
<rect x="591" y="640" width="1" height="3" fill="#008000"/>
<rect x="598" y="640" width="1" height="4" fill="#008000"/>
<rect x="605" y="640" width="1" height="6" fill="#008000"/>
<rect x="612" y="640" width="1" height="11" fill="#008000"/>
<rect x="619" y="640" width="1" height="14" fill="#008000"/>
<rect x="626" y="640" width="1" height="17" fill="#008000"/>
<rect x="633" y="640" width="1" height="16" fill="#008000"/>
<rect x="640" y="640" width="1" height="13" fill="#008000"/>
<rect x="647" y="640" width="1" height="7" fill="#008000"/>
<rect x="661" y="633" width="1" height="7" fill="#ff0000"/>
<rect x="668" y="627" width="1" height="13" fill="#ff0000"/>
<rect x="675" y="625" width="1" height="15" fill="#ff0000"/>
<rect x="682" y="626" width="1" height="14" fill="#ff0000"/>
<rect x="689" y="629" width="1" height="11" fill="#ff0000"/>
<rect x="696" y="629" width="1" height="11" fill="#ff0000"/>
<rect x="703" y="629" width="1" height="11" fill="#ff0000"/>
<rect x="710" y="637" width="1" height="3" fill="#ff0000"/>
<rect x="717" y="640" width="1" height="1" fill="#008000"/>
<rect x="724" y="640" width="1" height="2" fill="#008000"/>
<rect x="731" y="640" width="1" height="2" fill="#008000"/>
<rect x="738" y="640" width="1" height="7" fill="#008000"/>
<rect x="745" y="640" width="1" height="9" fill="#008000"/>
<rect x="752" y="640" width="1" height="5" fill="#008000"/>
<rect x="759" y="640" width="1" height="3" fill="#008000"/>
<rect x="766" y="640" width="1" height="1" fill="#008000"/>
<rect x="773" y="640" width="1" height="1" fill="#008000"/>
<rect x="780" y="639" width="1" height="1" fill="#ff0000"/>
<rect x="787" y="636" width="1" height="4" fill="#ff0000"/>
<rect x="794" y="634" width="1" height="6" fill="#ff0000"/>
<rect x="801" y="636" width="1" height="4" fill="#ff0000"/>
<rect x="808" y="639" width="1" height="1" fill="#ff0000"/>
<rect x="815" y="640" width="1" height="2" fill="#008000"/>
<rect x="822" y="640" width="1" height="3" fill="#008000"/>
<rect x="829" y="640" width="1" height="6" fill="#008000"/>
<rect x="836" y="640" width="1" height="11" fill="#008000"/>
<rect x="843" y="640" width="1" height="11" fill="#008000"/>
<rect x="850" y="640" width="1" height="13" fill="#008000"/>
<rect x="857" y="640" width="1" height="16" fill="#008000"/>
<rect x="864" y="640" width="1" height="22" fill="#008000"/>
<rect x="871" y="640" width="1" height="25" fill="#008000"/>
<rect x="878" y="640" width="1" height="25" fill="#008000"/>
<rect x="885" y="640" width="1" height="20" fill="#008000"/>
<rect x="892" y="640" width="1" height="11" fill="#008000"/>
<rect x="899" y="640" width="1" height="1" fill="#008000"/>
<rect x="906" y="633" width="1" height="7" fill="#ff0000"/>
<rect x="913" y="626" width="1" height="14" fill="#ff0000"/>
<rect x="920" y="621" width="1" height="19" fill="#ff0000"/>
<rect x="927" y="623" width="1" height="17" fill="#ff0000"/>
<rect x="934" y="624" width="1" height="16" fill="#ff0000"/>
<rect x="941" y="627" width="1" height="13" fill="#ff0000"/>
<rect x="948" y="622" width="1" height="18" fill="#ff0000"/>
<rect x="955" y="621" width="1" height="19" fill="#ff0000"/>
<rect x="962" y="618" width="1" height="22" fill="#ff0000"/>
<rect x="969" y="619" width="1" height="21" fill="#ff0000"/>
<rect x="976" y="623" width="1" height="17" fill="#ff0000"/>
<rect x="983" y="627" width="1" height="13" fill="#ff0000"/>
<rect x="990" y="631" width="1" height="9" fill="#ff0000"/>
<rect x="997" y="635" width="1" height="5" fill="#ff0000"/>
<rect x="1004" y="638" width="1" height="2" fill="#ff0000"/>
<rect x="1011" y="640" width="1" height="1" fill="#008000"/>
<rect x="1018" y="640" width="1" height="3" fill="#008000"/>
<rect x="1025" y="640" width="1" height="4" fill="#008000"/>
<rect x="1032" y="640" width="1" height="5" fill="#008000"/>
<rect x="1039" y="640" width="1" height="7" fill="#008000"/>
<rect x="1046" y="640" width="1" height="8" fill="#008000"/>
<rect x="1053" y="640" width="1" height="9" fill="#008000"/>
<rect x="1060" y="640" width="1" height="9" fill="#008000"/>
<rect x="1067" y="640" width="1" height="9" fill="#008000"/>
<rect x="1074" y="640" width="1" height="9" fill="#008000"/>
<rect x="1081" y="640" width="1" height="10" fill="#008000"/>
<rect x="1088" y="640" width="1" height="9" fill="#008000"/>
<rect x="1095" y="640" width="1" height="9" fill="#008000"/>
<rect x="1102" y="640" width="1" height="9" fill="#008000"/>
<rect x="1109" y="640" width="1" height="9" fill="#008000"/>
<rect x="1116" y="640" width="1" height="9" fill="#008000"/>
<rect x="1123" y="640" width="1" height="9" fill="#008000"/>
<rect x="1130" y="640" width="1" height="8" fill="#008000"/>
<rect x="1137" y="640" width="1" height="8" fill="#008000"/>
<rect x="1144" y="640" width="1" height="8" fill="#008000"/>
<rect x="1151" y="640" width="1" height="7" fill="#008000"/>
<rect x="1158" y="640" width="1" height="7" fill="#008000"/>
<rect x="1165" y="640" width="1" height="5" fill="#008000"/>
<rect x="1172" y="640" width="1" height="5" fill="#008000"/>
<rect x="1179" y="640" width="1" height="5" fill="#008000"/>
<rect x="1186" y="640" width="1" height="5" fill="#008000"/>
<rect x="1193" y="640" width="1" height="5" fill="#008000"/>
<path d="M73 647.5h2M75 648.5h4M79 649.5h44M123 650.5h19M142 651.5h3M145 650.5h9M154 649.5h10M164 648.5h9M173 647.5h6M179 646.5h7M186 645.5h14M200 644.5h10M210 643.5h18M228 642.5h7M235 641.5h8M243 640.5h5M248 639.5h5M253 638.5h4M257 637.5h5M262 636.5h5M267 635.5h13M280 636.5h11M291 637.5h9M300 638.5h15M315 639.5h23M338 638.5h11M349 637.5h11M360 636.5h7M367 635.5h9M376 636.5h25M401 635.5h37M438 634.5h10M448 633.5h5M453 632.5h4M457 631.5h3M460 630.5h2M462 629.5h3M465 628.5h2M467 627.5h2M469 626.5h2M471 625.5h2M473 624.5h2M475 623.5h2M477 622.5h2M479 621.5h2M481 620.5h1M482 619.5h1M483 618.5h1M484 617.5h1M485 616.5h2M487 615.5h2M489 614.5h2M491 613.5h3M494 612.5h2M496 611.5h1M497 610.5h2M499 609.5h2M501 608.5h2M503 607.5h2M505 606.5h2M507 605.5h2M509 604.5h2M511 603.5h2M513 602.5h3M516 601.5h3M519 600.5h3M522 599.5h6M528 598.5h5M533 597.5h10M543 596.5h41M584 597.5h12M596 598.5h5M601 599.5h4M605 600.5h4M609 601.5h3M612 602.5h4M616 603.5h3M619 604.5h4M623 605.5h4M627 606.5h3M630 607.5h4M634 608.5h5M639 609.5h17M656 608.5h7M663 607.5h4M667 606.5h4M671 605.5h4M675 604.5h5M680 603.5h6M686 602.5h6M692 601.5h4M696 600.5h5M701 599.5h29M730 600.5h5M735 601.5h3M738 602.5h5M743 603.5h9M752 604.5h32M784 603.5h11M795 602.5h20M815 603.5h10M825 604.5h5M830 605.5h5M835 606.5h4M839 607.5h5M844 608.5h5M849 609.5h4M853 610.5h2M855 611.5h3M858 612.5h2M860 613.5h2M862 614.5h2M864 615.5h2M866 616.5h3M869 617.5h2M871 618.5h2M873 619.5h2M875 620.5h2M877 621.5h2M879 622.5h2M881 623.5h3M884 624.5h3M887 625.5h9M896 626.5h5M901 625.5h4M905 624.5h4M909 623.5h4M913 622.5h4M917 621.5h3M920 620.5h4M924 619.5h3M927 618.5h4M931 617.5h4M935 616.5h3M938 615.5h4M942 614.5h3M945 613.5h4M949 612.5h2M951 611.5h3M954 610.5h2M956 609.5h3M959 608.5h4M963 607.5h2M965 606.5h2M967 605.5h2M969 604.5h3M972 603.5h4M976 602.5h4M980 601.5h4M984 600.5h7M991 599.5h24M1015 600.5h8M1023 601.5h8M1031 602.5h6M1037 603.5h7M1044 604.5h6M1050 605.5h5M1055 606.5h5M1060 607.5h4M1064 608.5h5M1069 609.5h6M1075 610.5h5M1080 611.5h6M1086 612.5h5M1091 613.5h5M1096 614.5h5M1101 615.5h6M1107 616.5h4M1111 617.5h5M1116 618.5h6M1122 619.5h6M1128 620.5h6M1134 621.5h5M1139 622.5h6M1145 623.5h7M1152 624.5h6M1158 625.5h6M1164 626.5h8M1172 627.5h8M1180 628.5h10M1190 629.5h4" fill="none" stroke="#0000ff" stroke-width="1"/>
<path d="M73 655.5h5M78 656.5h3M81 655.5h2M83 654.5h3M86 653.5h2M88 652.5h3M91 651.5h2M93 650.5h3M96 649.5h4M100 648.5h6M106 649.5h12M118 650.5h4M122 651.5h6M128 652.5h3M131 651.5h13M144 650.5h4M148 649.5h4M152 648.5h4M156 647.5h4M160 646.5h5M165 645.5h4M169 644.5h6M175 643.5h7M182 642.5h39M221 641.5h4M225 640.5h3M228 639.5h5M233 638.5h5M238 637.5h5M243 636.5h5M248 635.5h2M250 634.5h2M252 633.5h1M253 632.5h2M255 631.5h16M271 632.5h2M273 633.5h2M275 634.5h3M278 635.5h2M280 636.5h3M283 637.5h3M286 638.5h5M291 639.5h7M298 640.5h4M302 641.5h15M317 640.5h11M328 639.5h6M334 638.5h3M337 637.5h5M342 636.5h7M349 635.5h5M354 634.5h9M363 633.5h8M371 634.5h3M374 635.5h5M379 636.5h16M395 635.5h5M400 634.5h6M406 633.5h7M413 634.5h22M435 633.5h5M440 632.5h4M444 631.5h3M447 630.5h2M449 629.5h2M451 628.5h2M453 627.5h1M454 626.5h2M456 625.5h2M458 624.5h1M459 623.5h1M460 622.5h1M461 621.5h1M462.5 620v1M462 619.5h1M463 618.5h1M464 617.5h1M465 616.5h1M466 615.5h1M467 614.5h1M468 613.5h1M469 612.5h1M470 611.5h1M471 610.5h1M472 609.5h2M474 608.5h1M475 607.5h1M476 606.5h1M477 605.5h2M479 604.5h1M480 603.5h2M482 602.5h1M483 601.5h2M485 600.5h2M487 599.5h2M489 598.5h2M491 597.5h3M494 596.5h2M496 595.5h2M498 594.5h2M500 593.5h2M502 592.5h3M505 591.5h2M507 590.5h10M517 591.5h3M520 592.5h5M525 593.5h26M551 594.5h3M554 595.5h2M556 596.5h25M581 597.5h5M586 598.5h4M590 599.5h4M594 600.5h5M599 601.5h3M602 602.5h4M606 603.5h2M608 604.5h1M609 605.5h2M611 606.5h2M613 607.5h1M614 608.5h2M616 609.5h2M618 610.5h1M619 611.5h2M621 612.5h2M623 613.5h2M625 614.5h3M628 615.5h4M632 616.5h9M641 615.5h2M643 614.5h2M645 613.5h2M647 612.5h2M649 611.5h2M651 610.5h2M653 609.5h2M655 608.5h2M657 607.5h2M659 606.5h1M660 605.5h2M662 604.5h2M664 603.5h2M666 602.5h2M668 601.5h2M670 600.5h2M672 599.5h2M674 598.5h2M676 597.5h4M680 596.5h10M690 595.5h5M695 594.5h8M703 593.5h1M704 594.5h2M706 595.5h1M707 596.5h2M709 597.5h3M712 598.5h4M716 599.5h3M719 600.5h4M723 601.5h9M732 602.5h2M734 603.5h2M736 604.5h2M738 605.5h3M741 606.5h3M744 607.5h4M748 606.5h7M755 605.5h11M766 604.5h15M781 603.5h3M784 602.5h4M788 601.5h4M792 600.5h13M805 601.5h3M808 602.5h4M812 603.5h3M815 604.5h6M821 605.5h3M824 606.5h3M827 607.5h3M830 608.5h2M832 609.5h2M834 610.5h2M836 611.5h3M839 612.5h4M843 613.5h2M845 614.5h2M847 615.5h2M849 616.5h1M850 617.5h3M853 618.5h2M855 619.5h3M858 620.5h1M859 621.5h1M860 622.5h1M861 623.5h1M862 624.5h2M864 625.5h1M865 626.5h1M866 627.5h1M867 628.5h1M868 629.5h2M870 630.5h1M871 631.5h1M872 632.5h2M874 633.5h2M876 634.5h2M878 635.5h8M886 634.5h2M888 633.5h2M890 632.5h2M892 631.5h2M894 630.5h2M896 629.5h2M898 628.5h2M900 627.5h1M901 626.5h1M902 625.5h1M903 624.5h1M904 623.5h1M905 622.5h1M906 621.5h1M907 620.5h1M908 619.5h2M910 618.5h1M911 617.5h1M912 616.5h2M914 615.5h1M915 614.5h2M917 613.5h2M919 612.5h2M921 611.5h4M925 610.5h4M929 609.5h7M936 608.5h6M942 607.5h2M944 606.5h2M946 605.5h1M947 604.5h2M949 603.5h2M951 602.5h2M953 601.5h2M955 600.5h2M957 599.5h2M959 598.5h2M961 597.5h3M964 596.5h3M967 595.5h5M972 594.5h12M984 595.5h5M989 596.5h4M993 597.5h5M998 598.5h6M1004 599.5h4M1008 600.5h5M1013 601.5h3M1016 602.5h4M1020 603.5h4M1024 604.5h4M1028 605.5h4M1032 606.5h5M1037 607.5h4M1041 608.5h4M1045 609.5h4M1049 610.5h4M1053 611.5h4M1057 612.5h4M1061 613.5h4M1065 614.5h5M1070 615.5h5M1075 616.5h5M1080 617.5h5M1085 618.5h6M1091 619.5h5M1096 620.5h6M1102 621.5h6M1108 622.5h6M1114 623.5h6M1120 624.5h8M1128 625.5h8M1136 626.5h7M1143 627.5h7M1150 628.5h6M1156 629.5h9M1165 630.5h13M1178 631.5h15M1193 632.5h1" fill="none" stroke="#000" stroke-width="1"/>
<g shape-rendering="auto">
<text x="38.1 44.1 50.6 56.1 62.1" y="599" font-family="'Liberation Sans','Noto Serif CJK SC',sans-serif" font-size="10.4px" fill="#383838">39.32</text>
<text x="38.1 44.1 50.6 56.1 62.1" y="617" font-family="'Liberation Sans','Noto Serif CJK SC',sans-serif" font-size="10.4px" fill="#383838">23.16</text>
<text x="44.1 50.6 56.1 62.1" y="635" font-family="'Liberation Sans','Noto Serif CJK SC',sans-serif" font-size="10.4px" fill="#383838">7.01</text>
<text x="39.3 44.1 50.6 56.1 62.1" y="653" font-family="'Liberation Sans','Noto Serif CJK SC',sans-serif" font-size="10.4px" fill="#383838">-9.15</text>
<text x="3" y="587.5" font-family="'Liberation Mono',monospace" font-size="15px" fill="#0000ff" stroke="#0000ff" stroke-width="0.3" textLength="27" lengthAdjust="spacingAndGlyphs">MACD</text>
<g font-family="'Liberation Sans',sans-serif" font-size="10.5px">
<text x="75" y="587" fill="#000">DIF=-14.27</text>
<text x="146" y="587" fill="#0000ff">DEA=-7.21</text>
<text x="217" y="587" fill="#ff00ff">MACD=-14.11</text>
</g></g>
</svg>
<svg id="ui" width="1237" height="112" viewBox="0 0 1237 112" style="position:absolute;left:0;top:0" shape-rendering="crispEdges">
<rect x="5" y="35" width="1" height="21" fill="#a0a0a0"/><rect x="6" y="35" width="1" height="21" fill="#fff"/><rect x="4" y="55" width="1" height="1" fill="#a0a0a0"/>
<g transform="translate(11,38)" ><rect x="0.5" y="0.5" width="15" height="12" fill="#fff" stroke="#000"/><rect x="2" y="1" width="12" height="2" fill="#0000d0"/><rect x="2" y="4" width="2" height="1" fill="#000"/><rect x="5" y="4" width="2" height="1" fill="#000"/><rect x="8" y="4" width="2" height="1" fill="#000"/><rect x="11" y="4" width="3" height="1" fill="#000"/><rect x="2" y="6" width="2" height="1" fill="#000"/><rect x="5" y="6" width="2" height="1" fill="#000"/><rect x="8" y="6" width="2" height="1" fill="#000"/><rect x="11" y="6" width="3" height="1" fill="#000"/><rect x="2" y="8" width="2" height="1" fill="#000"/><rect x="5" y="8" width="2" height="1" fill="#000"/><rect x="8" y="8" width="2" height="1" fill="#000"/><rect x="11" y="8" width="3" height="1" fill="#000"/><rect x="2" y="10" width="2" height="1" fill="#000"/><rect x="5" y="10" width="2" height="1" fill="#000"/><rect x="8" y="10" width="2" height="1" fill="#000"/><rect x="11" y="10" width="3" height="1" fill="#000"/></g>
<g transform="translate(64,38)" ><rect x="0" y="0" width="8" height="8" fill="#00c8c8"/><rect x="1" y="1" width="6" height="6" fill="#008080"/><rect x="2" y="2" width="4" height="4" fill="#007070"/><rect x="9.5" y="0.5" width="6" height="6" fill="#00ffff" stroke="#000"/><rect x="0.5" y="8.5" width="6" height="6" fill="#00ffff" stroke="#000"/><rect x="8" y="7" width="8" height="8" fill="#00c8c8"/><rect x="9" y="8" width="6" height="6" fill="#008080"/><rect x="0.5" y="0.5" width="7" height="7" fill="none" stroke="#000" stroke-dasharray="1 1"/><rect x="8.5" y="7.5" width="7" height="7" fill="none" stroke="#000" stroke-dasharray="1 1"/></g>
<rect x="118" y="44" width="1" height="9" fill="#ff0000"/><rect x="117.5" y="45.5" width="2" height="6" fill="#fff" stroke="#ff0000"/><rect x="122" y="41" width="1" height="9" fill="#ff0000"/><rect x="121.5" y="43.5" width="2" height="4" fill="#fff" stroke="#ff0000"/><rect x="126" y="41" width="1" height="6" fill="#008000"/><rect x="125.5" y="43.5" width="2" height="2" fill="#fff" stroke="#008000"/><rect x="130" y="37" width="1" height="9" fill="#ff0000"/><rect x="129.5" y="39.5" width="2" height="5" fill="#fff" stroke="#ff0000"/>
<g transform="translate(167,38)" ><rect x="0.5" y="0.5" width="12" height="12" fill="#fff" stroke="#ff0000" stroke-dasharray="1 1"/><rect x="0.5" y="0.5" width="12" height="12" fill="none" stroke="#ff0000" stroke-opacity="0.45"/><text x="6.5" y="10" font-family="'Liberation Sans','Noto Sans CJK SC',sans-serif" font-size="9px" font-weight="bold" fill="#000" text-anchor="middle" textLength="9.5" lengthAdjust="spacingAndGlyphs" shape-rendering="auto">PS</text></g>
<g transform="translate(239,38)" ><rect x="0.5" y="0.5" width="12" height="12" fill="#fff" stroke="#ff00ff" stroke-dasharray="1 1"/><rect x="0.5" y="0.5" width="12" height="12" fill="none" stroke="#ff00ff" stroke-opacity="0.45"/><text x="6.5" y="10" font-family="'Liberation Sans','Noto Sans CJK SC',sans-serif" font-size="9px" font-weight="bold" fill="#800000" text-anchor="middle" textLength="9.5" lengthAdjust="spacingAndGlyphs" shape-rendering="auto">P9</text></g>
<g transform="translate(318,38)" ><rect x="0.5" y="0.5" width="12" height="12" fill="#fff" stroke="#ff0000" stroke-dasharray="1 1"/><rect x="0.5" y="0.5" width="12" height="12" fill="none" stroke="#ff0000" stroke-opacity="0.45"/><text x="6.5" y="10" font-family="'Liberation Sans','Noto Sans CJK SC',sans-serif" font-size="9px" font-weight="bold" fill="#000" text-anchor="middle" textLength="9.5" lengthAdjust="spacingAndGlyphs" shape-rendering="auto">PN</text></g>
<g transform="translate(390,38)" ><rect x="0.5" y="0.5" width="12" height="12" fill="#fff" stroke="#00c000" stroke-dasharray="1 1"/><rect x="0.5" y="0.5" width="12" height="12" fill="none" stroke="#00c000" stroke-opacity="0.45"/><text x="6.5" y="10" font-family="'Liberation Sans','Noto Sans CJK SC',sans-serif" font-size="9px" font-weight="bold" fill="#800000" text-anchor="middle" textLength="9.5" lengthAdjust="spacingAndGlyphs" shape-rendering="auto">TS</text></g>
<g transform="translate(462,38)" ><rect x="0.5" y="0.5" width="12" height="12" fill="#fff" stroke="#00d8d8" stroke-dasharray="1 1"/><rect x="0.5" y="0.5" width="12" height="12" fill="none" stroke="#00d8d8" stroke-opacity="0.45"/><text x="6.5" y="10" font-family="'Liberation Sans','Noto Sans CJK SC',sans-serif" font-size="9px" font-weight="bold" fill="#800000" text-anchor="middle" textLength="9.5" lengthAdjust="spacingAndGlyphs" shape-rendering="auto">T9</text></g>
<g transform="translate(541,38)" ><rect x="0.5" y="0.5" width="12" height="12" fill="#fff" stroke="#00c000" stroke-dasharray="1 1"/><rect x="0.5" y="0.5" width="12" height="12" fill="none" stroke="#00c000" stroke-opacity="0.45"/><text x="6.5" y="10" font-family="'Liberation Sans','Noto Sans CJK SC',sans-serif" font-size="9px" font-weight="bold" fill="#800000" text-anchor="middle" textLength="9.5" lengthAdjust="spacingAndGlyphs" shape-rendering="auto">TN</text></g>
<g transform="translate(612,38)" ><g shape-rendering="auto"><circle cx="7.5" cy="7.5" r="6.6" fill="#e8e0dc" stroke="#8a1010" stroke-width="1.7"/><circle cx="7.5" cy="7.5" r="3.6" fill="#f4f4f0" stroke="#208030" stroke-width="1.3"/><path d="M7.5 2 V13 M2 7.5 H13" stroke="#a06060" stroke-width="0.7"/><circle cx="7.5" cy="7.5" r="1.4" fill="#e03030"/></g></g>
<g transform="translate(677,38)" ><g shape-rendering="auto"><circle cx="7.5" cy="7.5" r="7" fill="#fff" stroke="#207090" stroke-width="1.2"/><text x="7.6" y="11.3" font-family="'Liberation Sans','Noto Sans CJK SC',sans-serif" font-size="11px" font-weight="bold" fill="#18a018" text-anchor="middle" textLength="12" lengthAdjust="spacingAndGlyphs">Big</text></g></g>
<g transform="translate(742,38)" ><g shape-rendering="auto"><polygon points="0.7,7.5 4.5,1 11.5,1 15.3,7.5 11.5,14 4.5,14" fill="#fff" stroke="#d00000" stroke-width="1.4"/><circle cx="8" cy="7.5" r="3.6" fill="#fff" stroke="#0000c0" stroke-width="1.8"/><circle cx="8" cy="7.5" r="1.3" fill="#00a000"/></g></g>
<text x="809" y="52" font-family="'Liberation Sans','Noto Sans CJK SC',sans-serif" font-size="17px" font-weight="bold" fill="#6cc56c" shape-rendering="auto" textLength="10" lengthAdjust="spacingAndGlyphs">$</text>
<rect x="5" y="62" width="1" height="20" fill="#a0a0a0"/><rect x="6" y="62" width="1" height="20" fill="#fff"/><rect x="4" y="81" width="1" height="1" fill="#a0a0a0"/>
<text x="13" y="77" font-family="'Liberation Sans','Noto Sans CJK SC',sans-serif" font-size="13px" font-weight="bold" fill="#000" shape-rendering="auto">日</text>
<rect x="30" y="71" width="5" height="1" fill="#000"/><rect x="31" y="72" width="3" height="1" fill="#000"/><rect x="32" y="73" width="1" height="1" fill="#000"/>
<rect x="153" y="71" width="5" height="1" fill="#000"/><rect x="154" y="72" width="3" height="1" fill="#000"/><rect x="155" y="73" width="1" height="1" fill="#000"/>
<rect x="39" y="61" width="22" height="21" fill="#f8f8f8"/><rect x="39" y="61" width="22" height="1" fill="#a0a0a0"/><rect x="39" y="61" width="1" height="21" fill="#a0a0a0"/><rect x="39" y="81" width="22" height="1" fill="#fff"/><rect x="60" y="61" width="1" height="21" fill="#fff"/>
<rect x="162" y="61" width="22" height="21" fill="#f8f8f8"/><rect x="162" y="61" width="22" height="1" fill="#a0a0a0"/><rect x="162" y="61" width="1" height="21" fill="#a0a0a0"/><rect x="162" y="81" width="22" height="1" fill="#fff"/><rect x="183" y="61" width="1" height="21" fill="#fff"/>
<rect x="185" y="61" width="22" height="21" fill="#f8f8f8"/><rect x="185" y="61" width="22" height="1" fill="#a0a0a0"/><rect x="185" y="61" width="1" height="21" fill="#a0a0a0"/><rect x="185" y="81" width="22" height="1" fill="#fff"/><rect x="206" y="61" width="1" height="21" fill="#fff"/>
<rect x="473" y="61" width="22" height="21" fill="#f8f8f8"/><rect x="473" y="61" width="22" height="1" fill="#a0a0a0"/><rect x="473" y="61" width="1" height="21" fill="#a0a0a0"/><rect x="473" y="81" width="22" height="1" fill="#fff"/><rect x="494" y="61" width="1" height="21" fill="#fff"/>
<rect x="542" y="61" width="22" height="21" fill="#f8f8f8"/><rect x="542" y="61" width="22" height="1" fill="#a0a0a0"/><rect x="542" y="61" width="1" height="21" fill="#a0a0a0"/><rect x="542" y="81" width="22" height="1" fill="#fff"/><rect x="563" y="61" width="1" height="21" fill="#fff"/>
<rect x="49" y="66" width="4" height="1" fill="#0000ff"/><rect x="44" y="67" width="6" height="1" fill="#0000ff"/><rect x="52" y="67" width="6" height="1" fill="#0000ff"/><rect x="44" y="68" width="1" height="1" fill="#0000ff"/><rect x="57" y="68" width="1" height="1" fill="#0000ff"/><rect x="44" y="69" width="2" height="1" fill="#0000ff"/><rect x="47" y="69" width="3" height="1" fill="#0000ff"/><rect x="52" y="69" width="3" height="1" fill="#0000ff"/><rect x="56" y="69" width="2" height="1" fill="#0000ff"/><rect x="46" y="70" width="1" height="1" fill="#0000ff"/><rect x="50" y="70" width="2" height="1" fill="#0000ff"/><rect x="55" y="70" width="2" height="1" fill="#0000ff"/><rect x="45" y="71" width="1" height="1" fill="#0000ff"/><rect x="48" y="71" width="2" height="1" fill="#0000ff"/><rect x="52" y="71" width="2" height="1" fill="#0000ff"/><rect x="57" y="71" width="1" height="1" fill="#0000ff"/><rect x="44" y="72" width="2" height="1" fill="#0000ff"/><rect x="47" y="72" width="1" height="1" fill="#0000ff"/><rect x="54" y="72" width="1" height="1" fill="#0000ff"/><rect x="56" y="72" width="1" height="1" fill="#0000ff"/><rect x="45" y="73" width="2" height="1" fill="#0000ff"/><rect x="48" y="73" width="1" height="1" fill="#0000ff"/><rect x="54" y="73" width="1" height="1" fill="#0000ff"/><rect x="56" y="73" width="2" height="1" fill="#0000ff"/><rect x="46" y="74" width="3" height="1" fill="#0000ff"/><rect x="54" y="74" width="2" height="1" fill="#0000ff"/><rect x="46" y="75" width="2" height="1" fill="#0000ff"/><rect x="56" y="75" width="2" height="1" fill="#0000ff"/><rect x="45" y="76" width="1" height="1" fill="#0000ff"/><rect x="50" y="76" width="2" height="1" fill="#0000ff"/><rect x="57" y="76" width="1" height="1" fill="#0000ff"/><rect x="45" y="77" width="2" height="1" fill="#0000ff"/><rect x="49" y="77" width="1" height="1" fill="#0000ff"/><rect x="52" y="77" width="2" height="1" fill="#0000ff"/><rect x="56" y="77" width="2" height="1" fill="#0000ff"/><rect x="46" y="78" width="3" height="1" fill="#0000ff"/><rect x="54" y="78" width="3" height="1" fill="#0000ff"/>
<rect x="70" y="65" width="5" height="1" fill="#0000ff"/><rect x="68" y="66" width="3" height="1" fill="#0000ff"/><rect x="74" y="66" width="3" height="1" fill="#0000ff"/><rect x="67" y="67" width="1" height="10" fill="#0000ff"/><rect x="77" y="67" width="1" height="10" fill="#0000ff"/><rect x="68" y="77" width="9" height="1" fill="#0000ff"/><rect x="70" y="69" width="4" height="1" fill="#0000ff"/><rect x="70" y="72" width="4" height="1" fill="#0000ff"/><rect x="70" y="74" width="4" height="1" fill="#0000ff"/>
<g transform="translate(89,65)" ><path d="M0.5 13 V9.5 H2.5 V11.5 H4.5 V6.5 H6.5 V8.5 H8.5 V0.5 H10.5 V6.5 H12.5 V2" fill="none" stroke="#800080" stroke-width="1"/><text x="9.5" y="15" font-family="'Liberation Sans','Noto Sans CJK SC',sans-serif" font-size="7px" font-weight="bold" fill="#000" shape-rendering="auto">3</text></g>
<g transform="translate(112,65)" ><path d="M0.5 13 V9.5 H2.5 V11.5 H4.5 V6.5 H6.5 V8.5 H8.5 V0.5 H10.5 V6.5 H12.5 V2" fill="none" stroke="#800000" stroke-width="1"/><text x="9.5" y="15" font-family="'Liberation Sans','Noto Sans CJK SC',sans-serif" font-size="7px" font-weight="bold" fill="#000" shape-rendering="auto">9</text></g>
<rect x="141" y="65" width="1" height="15" fill="#000"/><rect x="139.5" y="68.5" width="4" height="8" fill="#fff" stroke="#000" stroke-width="1.4"/>
<rect x="168" y="65" width="3" height="1" fill="#800000"/><rect x="168" y="66" width="1" height="1" fill="#800000"/><rect x="170" y="66" width="10" height="1" fill="#800000"/><rect x="168" y="67" width="1" height="1" fill="#800000"/><rect x="171" y="67" width="1" height="1" fill="#800000"/><rect x="179" y="67" width="1" height="1" fill="#800000"/><rect x="166" y="68" width="2" height="1" fill="#800000"/><rect x="171" y="68" width="1" height="1" fill="#800000"/><rect x="179" y="68" width="1" height="1" fill="#800000"/><rect x="166" y="69" width="1" height="1" fill="#800000"/><rect x="171" y="69" width="1" height="1" fill="#800000"/><rect x="175" y="69" width="2" height="1" fill="#800000"/><rect x="179" y="69" width="1" height="1" fill="#800000"/><rect x="166" y="70" width="1" height="1" fill="#800000"/><rect x="171" y="70" width="1" height="1" fill="#800000"/><rect x="175" y="70" width="2" height="1" fill="#800000"/><rect x="179" y="70" width="1" height="1" fill="#800000"/><rect x="167" y="71" width="2" height="1" fill="#800000"/><rect x="170" y="71" width="1" height="1" fill="#800000"/><rect x="172" y="71" width="1" height="1" fill="#800000"/><rect x="178" y="71" width="1" height="1" fill="#800000"/><rect x="167" y="72" width="1" height="1" fill="#800000"/><rect x="170" y="72" width="1" height="1" fill="#800000"/><rect x="172" y="72" width="2" height="1" fill="#800000"/><rect x="178" y="72" width="1" height="1" fill="#800000"/><rect x="166" y="73" width="1" height="1" fill="#800000"/><rect x="170" y="73" width="1" height="1" fill="#800000"/><rect x="173" y="73" width="1" height="1" fill="#800000"/><rect x="177" y="73" width="1" height="1" fill="#800000"/><rect x="166" y="74" width="1" height="1" fill="#800000"/><rect x="171" y="74" width="2" height="1" fill="#800000"/><rect x="177" y="74" width="1" height="1" fill="#800000"/><rect x="166" y="75" width="1" height="1" fill="#800000"/><rect x="171" y="75" width="1" height="1" fill="#800000"/><rect x="178" y="75" width="1" height="1" fill="#800000"/><rect x="167" y="76" width="2" height="1" fill="#800000"/><rect x="170" y="76" width="2" height="1" fill="#800000"/><rect x="179" y="76" width="1" height="1" fill="#800000"/><rect x="168" y="77" width="1" height="1" fill="#800000"/><rect x="170" y="77" width="1" height="1" fill="#800000"/><rect x="174" y="77" width="2" height="1" fill="#800000"/><rect x="179" y="77" width="1" height="1" fill="#800000"/><rect x="168" y="78" width="1" height="1" fill="#800000"/><rect x="170" y="78" width="1" height="1" fill="#800000"/><rect x="173" y="78" width="1" height="1" fill="#800000"/><rect x="176" y="78" width="1" height="1" fill="#800000"/><rect x="179" y="78" width="1" height="1" fill="#800000"/><rect x="168" y="79" width="6" height="1" fill="#800000"/><rect x="177" y="79" width="2" height="1" fill="#800000"/>
<rect x="191" y="65" width="1" height="1" fill="#ff00ff"/><rect x="191" y="66" width="3" height="1" fill="#ff00ff"/><rect x="191" y="67" width="7" height="1" fill="#ff00ff"/><rect x="191" y="68" width="6" height="1" fill="#ff00ff"/><rect x="191" y="69" width="5" height="1" fill="#ff00ff"/><rect x="191" y="70" width="10" height="1" fill="#ff00ff"/><rect x="191" y="71" width="14" height="1" fill="#ff00ff"/><rect x="191" y="72" width="12" height="1" fill="#008080"/><rect x="191" y="73" width="10" height="1" fill="#008080"/><rect x="191" y="74" width="7" height="1" fill="#008080"/><rect x="191" y="75" width="4" height="1" fill="#008080"/><rect x="191" y="76" width="6" height="1" fill="#008080"/><rect x="191" y="77" width="3" height="1" fill="#008080"/><rect x="190" y="65" width="1" height="16" fill="#800000"/><rect x="189" y="79" width="16" height="1" fill="#800000"/>
<rect x="210" y="61" width="1" height="21" fill="#a0a0a0"/><rect x="211" y="61" width="1" height="21" fill="#fff"/>
<g shape-rendering="auto" stroke="#000" stroke-width="1" fill="#808000"><rect x="217.5" y="64.5" width="2.5" height="14.5"/><polygon points="232,64.5 220.5,71.7 232,79"/><rect x="252.5" y="64.5" width="2.5" height="14.5"/><polygon points="240.5,64.5 252,71.7 240.5,79"/></g>
<g shape-rendering="auto"><polygon points="264,71.5 278,79 278,76.2 272,71" fill="#000"/><polygon points="278,65 272,71 278,76.5" fill="#909090"/><path d="M264 71.5 L278 64.5" stroke="#606060" stroke-width="0.8"/><polygon points="301.5,71.5 287.5,79 287.5,76.2 293.5,71" fill="#000"/><polygon points="287.5,65 293.5,71 287.5,76.5" fill="#909090"/><path d="M301.5 71.5 L287.5 64.5" stroke="#606060" stroke-width="0.8"/></g>
<polygon points="309.3,71.5 316.5,64.3 323.7,71.5 316.5,78.7" fill="#ffff00" stroke="#000" stroke-width="0.9" shape-rendering="auto"/><rect x="312" y="71" width="9" height="1" fill="#000"/><rect x="313" y="70" width="1" height="3" fill="#000"/><rect x="314" y="69" width="1" height="2" fill="#000"/><rect x="314" y="72" width="1" height="2" fill="#000"/>
<polygon points="332.3,71.5 339.5,64.3 346.7,71.5 339.5,78.7" fill="#ffff00" stroke="#000" stroke-width="0.9" shape-rendering="auto"/><rect x="335" y="71" width="9" height="1" fill="#000"/><rect x="342" y="70" width="1" height="3" fill="#000"/><rect x="341" y="69" width="1" height="2" fill="#000"/><rect x="341" y="72" width="1" height="2" fill="#000"/>
<polygon points="355.3,71.5 362.5,64.3 369.7,71.5 362.5,78.7" fill="#ffff00" stroke="#000" stroke-width="0.9" shape-rendering="auto"/><rect x="357" y="71" width="5" height="1" fill="#000"/><rect x="358" y="70" width="1" height="3" fill="#000"/><rect x="359" y="69" width="1" height="2" fill="#000"/><rect x="359" y="72" width="1" height="2" fill="#000"/><rect x="363" y="71" width="5" height="1" fill="#000"/><rect x="366" y="70" width="1" height="3" fill="#000"/><rect x="365" y="69" width="1" height="2" fill="#000"/><rect x="365" y="72" width="1" height="2" fill="#000"/><rect x="362" y="66" width="1" height="1" fill="#909000"/><rect x="362" y="68" width="1" height="1" fill="#909000"/><rect x="362" y="70" width="1" height="1" fill="#909000"/><rect x="362" y="72" width="1" height="1" fill="#909000"/><rect x="362" y="74" width="1" height="1" fill="#909000"/><rect x="362" y="76" width="1" height="1" fill="#909000"/>
<polygon points="378.3,71.5 385.5,64.3 392.7,71.5 385.5,78.7" fill="#ffff00" stroke="#000" stroke-width="0.9" shape-rendering="auto"/><rect x="380" y="71" width="6" height="1" fill="#000"/><rect x="384" y="70" width="1" height="3" fill="#000"/><rect x="383" y="69" width="1" height="2" fill="#000"/><rect x="383" y="72" width="1" height="2" fill="#000"/><rect x="385" y="71" width="6" height="1" fill="#000"/><rect x="386" y="70" width="1" height="3" fill="#000"/><rect x="387" y="69" width="1" height="2" fill="#000"/><rect x="387" y="72" width="1" height="2" fill="#000"/><rect x="385" y="66" width="1" height="1" fill="#909000"/><rect x="385" y="68" width="1" height="1" fill="#909000"/><rect x="385" y="74" width="1" height="1" fill="#909000"/><rect x="385" y="76" width="1" height="1" fill="#909000"/>
<polygon points="401.3,71.5 408.5,64.3 415.7,71.5 408.5,78.7" fill="#ffff00" stroke="#000" stroke-width="0.9" shape-rendering="auto"/><rect x="403" y="71" width="11" height="1" fill="#000"/><rect x="408" y="66" width="1" height="11" fill="#000"/><rect x="406" y="70" width="1" height="3" fill="#000"/><rect x="410" y="70" width="1" height="3" fill="#000"/><rect x="407" y="69" width="3" height="1" fill="#000"/><rect x="407" y="73" width="3" height="1" fill="#000"/><rect x="405" y="68" width="1" height="1" fill="#000"/><rect x="411" y="68" width="1" height="1" fill="#000"/><rect x="405" y="74" width="1" height="1" fill="#000"/><rect x="411" y="74" width="1" height="1" fill="#000"/>
<polygon points="424.3,71.5 431.5,64.3 438.7,71.5 431.5,78.7" fill="#ffff00" stroke="#000" stroke-width="0.9" shape-rendering="auto"/><rect x="426" y="71" width="11" height="1" fill="#000"/><rect x="431" y="66" width="1" height="11" fill="#000"/><rect x="427" y="70" width="1" height="3" fill="#000"/><rect x="435" y="70" width="1" height="3" fill="#000"/><rect x="430" y="67" width="3" height="1" fill="#000"/><rect x="430" y="75" width="3" height="1" fill="#000"/><rect x="428" y="69" width="1" height="1" fill="#000"/><rect x="428" y="73" width="1" height="1" fill="#000"/><rect x="434" y="69" width="1" height="1" fill="#000"/><rect x="434" y="73" width="1" height="1" fill="#000"/><rect x="429" y="68" width="1" height="1" fill="#000"/><rect x="433" y="68" width="1" height="1" fill="#000"/><rect x="429" y="74" width="1" height="1" fill="#000"/><rect x="433" y="74" width="1" height="1" fill="#000"/>
<rect x="446" y="61" width="1" height="21" fill="#a0a0a0"/><rect x="447" y="61" width="1" height="21" fill="#fff"/>
<g transform="translate(454,64)" ><g fill="none" stroke="#000" stroke-width="1" shape-rendering="auto"><path d="M4 14.5 L0.8 9.5 C0 8 1.6 7 2.6 8.2 L4.5 10.5 L4.5 2.2 C4.5 0.6 6.5 0.6 6.5 2.2 L6.5 7"/><path d="M6.5 1.8 C6.5 0.2 8.5 0.2 8.5 1.8 L8.5 7"/><path d="M8.5 2.8 C8.5 1.4 10.5 1.4 10.5 2.8 L10.5 7.5"/><path d="M10.5 4.5 C10.5 3.2 12.5 3.2 12.5 4.5 L12.5 10 L10.5 14.5"/></g></g>
<rect x="478" y="72" width="14" height="1" fill="#000"/><rect x="484" y="66" width="1" height="14" fill="#000"/>
<g shape-rendering="auto" fill="none"><path d="M499 68 L503.5 76.5 L509.5 67.5 L514.5 74.5" stroke="#000" stroke-width="1.1"/><circle cx="503.5" cy="76.5" r="2" stroke="#ff0000" stroke-width="1.2" fill="#fff"/><circle cx="509.5" cy="67.5" r="2" stroke="#ff0000" stroke-width="1.2" fill="#fff"/></g>
<rect x="525" y="64" width="2" height="1" fill="#800080"/><rect x="530" y="64" width="4" height="1" fill="#800080"/><rect x="522" y="65" width="3" height="1" fill="#800080"/><rect x="527" y="65" width="3" height="1" fill="#800080"/><rect x="534" y="65" width="3" height="1" fill="#800080"/><rect x="522" y="66" width="1" height="1" fill="#800080"/><rect x="536" y="66" width="1" height="1" fill="#800080"/><rect x="522" y="67" width="1" height="1" fill="#800080"/><rect x="536" y="67" width="1" height="1" fill="#800080"/><rect x="522" y="68" width="1" height="1" fill="#800080"/><rect x="536" y="68" width="1" height="1" fill="#800080"/><rect x="522" y="69" width="4" height="1" fill="#800080"/><rect x="528" y="69" width="3" height="1" fill="#800080"/><rect x="533" y="69" width="4" height="1" fill="#800080"/><rect x="523" y="70" width="1" height="1" fill="#800080"/><rect x="526" y="70" width="2" height="1" fill="#800080"/><rect x="531" y="70" width="2" height="1" fill="#800080"/><rect x="535" y="70" width="1" height="1" fill="#800080"/><rect x="523" y="71" width="1" height="1" fill="#800080"/><rect x="535" y="71" width="1" height="1" fill="#800080"/><rect x="523" y="72" width="3" height="1" fill="#800080"/><rect x="529" y="72" width="3" height="1" fill="#800080"/><rect x="535" y="72" width="1" height="1" fill="#800080"/><rect x="526" y="73" width="1" height="1" fill="#800080"/><rect x="529" y="73" width="3" height="1" fill="#800080"/><rect x="535" y="73" width="1" height="1" fill="#800080"/><rect x="526" y="74" width="1" height="1" fill="#800080"/><rect x="529" y="74" width="1" height="1" fill="#800080"/><rect x="535" y="74" width="1" height="1" fill="#800080"/><rect x="526" y="75" width="1" height="1" fill="#800080"/><rect x="529" y="75" width="1" height="1" fill="#800080"/><rect x="534" y="75" width="2" height="1" fill="#800080"/><rect x="526" y="76" width="1" height="1" fill="#800080"/><rect x="529" y="76" width="6" height="1" fill="#800080"/><rect x="526" y="77" width="1" height="1" fill="#800080"/><rect x="529" y="77" width="1" height="1" fill="#800080"/><rect x="526" y="78" width="4" height="1" fill="#800080"/>
<rect x="549" y="65" width="3" height="1" fill="#008080"/><rect x="553" y="65" width="5" height="1" fill="#008080"/><rect x="548" y="66" width="1" height="1" fill="#008080"/><rect x="551" y="66" width="1" height="1" fill="#008080"/><rect x="553" y="66" width="1" height="1" fill="#008080"/><rect x="555" y="66" width="1" height="1" fill="#008080"/><rect x="558" y="66" width="1" height="1" fill="#008080"/><rect x="547" y="67" width="1" height="1" fill="#008080"/><rect x="552" y="67" width="1" height="1" fill="#008080"/><rect x="556" y="67" width="1" height="1" fill="#008080"/><rect x="559" y="67" width="1" height="1" fill="#008080"/><rect x="547" y="68" width="1" height="1" fill="#008080"/><rect x="550" y="68" width="1" height="1" fill="#008080"/><rect x="552" y="68" width="1" height="1" fill="#008080"/><rect x="557" y="68" width="2" height="1" fill="#008080"/><rect x="559" y="68" width="1" height="1" fill="#008080"/><rect x="546" y="69" width="1" height="1" fill="#008080"/><rect x="552" y="69" width="1" height="1" fill="#008080"/><rect x="554" y="69" width="1" height="1" fill="#008080"/><rect x="560" y="69" width="1" height="1" fill="#008080"/><rect x="546" y="70" width="1" height="1" fill="#008080"/><rect x="551" y="70" width="1" height="1" fill="#008080"/><rect x="553" y="70" width="2" height="1" fill="#008080"/><rect x="560" y="70" width="1" height="1" fill="#008080"/><rect x="546" y="71" width="1" height="1" fill="#008080"/><rect x="552" y="71" width="2" height="1" fill="#008080"/><rect x="556" y="71" width="3" height="1" fill="#008080"/><rect x="560" y="71" width="1" height="1" fill="#008080"/><rect x="547" y="72" width="2" height="1" fill="#008080"/><rect x="552" y="72" width="1" height="1" fill="#008080"/><rect x="558" y="72" width="2" height="1" fill="#008080"/><rect x="547" y="73" width="1" height="1" fill="#008080"/><rect x="552" y="73" width="1" height="1" fill="#008080"/><rect x="554" y="73" width="1" height="1" fill="#008080"/><rect x="558" y="73" width="1" height="1" fill="#008080"/><rect x="546" y="74" width="7" height="1" fill="#008080"/><rect x="556" y="74" width="1" height="1" fill="#008080"/><rect x="559" y="74" width="2" height="1" fill="#008080"/><rect x="546" y="75" width="1" height="1" fill="#008080"/><rect x="552" y="75" width="2" height="1" fill="#008080"/><rect x="557" y="75" width="1" height="1" fill="#008080"/><rect x="560" y="75" width="1" height="1" fill="#008080"/><rect x="546" y="76" width="1" height="1" fill="#008080"/><rect x="551" y="76" width="1" height="1" fill="#008080"/><rect x="553" y="76" width="1" height="1" fill="#008080"/><rect x="560" y="76" width="1" height="1" fill="#008080"/><rect x="546" y="77" width="1" height="1" fill="#008080"/><rect x="551" y="77" width="1" height="1" fill="#008080"/><rect x="553" y="77" width="1" height="1" fill="#008080"/><rect x="559" y="77" width="1" height="1" fill="#008080"/><rect x="546" y="78" width="5" height="1" fill="#008080"/><rect x="553" y="78" width="4" height="1" fill="#008080"/><rect x="558" y="78" width="1" height="1" fill="#008080"/><rect x="556" y="79" width="3" height="1" fill="#008080"/>
<rect x="567" y="61" width="1" height="21" fill="#a0a0a0"/><rect x="568" y="61" width="1" height="21" fill="#fff"/>
<g transform="translate(575,64)" ><rect x="1" y="3" width="13" height="12" fill="#000"/><rect x="0" y="2" width="13" height="12" fill="#fff"/><rect x="0.5" y="2.5" width="12" height="11" fill="#fff" stroke="#909090"/><rect x="1" y="3" width="11" height="2" fill="#40d8d8"/><rect x="2" y="0" width="1" height="3" fill="#606060"/><rect x="10" y="0" width="1" height="3" fill="#606060"/><text x="6.5" y="13" font-family="'Liberation Sans','Noto Sans CJK SC',sans-serif" font-size="9.5px" font-weight="bold" fill="#ff0000" text-anchor="middle" textLength="10" lengthAdjust="spacingAndGlyphs" shape-rendering="auto">21</text></g>
<g transform="translate(597,64)" ><rect x="0" y="0" width="15" height="15" fill="#004080"/><rect x="1" y="1" width="13" height="13" fill="#00c0c0"/><rect x="2" y="2" width="11" height="11" fill="#003050"/><rect x="3" y="3" width="9" height="3" fill="#c0e0e0"/><rect x="3" y="7" width="2" height="1" fill="#40e0e0"/><rect x="6" y="7" width="2" height="1" fill="#40e0e0"/><rect x="9" y="7" width="2" height="1" fill="#40e0e0"/><rect x="3" y="9" width="2" height="1" fill="#40e0e0"/><rect x="6" y="9" width="2" height="1" fill="#40e0e0"/><rect x="9" y="9" width="2" height="1" fill="#40e0e0"/><rect x="3" y="11" width="2" height="1" fill="#40e0e0"/><rect x="6" y="11" width="2" height="1" fill="#40e0e0"/><rect x="9" y="11" width="2" height="1" fill="#40e0e0"/></g>
<g transform="translate(620,64)" ><rect x="0.5" y="0.5" width="14" height="14" fill="#fff" stroke="#000" stroke-width="1.6"/><rect x="1" y="1" width="2" height="13" fill="#c0c0c0"/><rect x="1" y="2" width="2" height="1" fill="#000"/><rect x="1" y="5" width="2" height="1" fill="#000"/><rect x="1" y="8" width="2" height="1" fill="#000"/><rect x="1" y="11" width="2" height="1" fill="#000"/><rect x="5" y="3" width="8" height="1" fill="#0000ff"/><rect x="5" y="5" width="8" height="1" fill="#0000ff"/><rect x="5" y="7" width="7" height="1" fill="#0000ff"/><rect x="5" y="9" width="6" height="1" fill="#0000ff"/><polygon points="9,14 14,9 14,14" fill="#c0c0c0" stroke="#000" stroke-width="0.8" shape-rendering="auto"/></g>
<g transform="translate(644,64)" ><rect x="0" y="1" width="15" height="13" fill="#000"/><rect x="1" y="2" width="3" height="11" fill="#ff0000"/><rect x="4" y="2" width="10" height="7" fill="#60d0f0"/><polygon points="14,3 14,9 8,9" fill="#208020" shape-rendering="auto"/><rect x="6" y="4" width="2" height="2" fill="#ffff40"/><rect x="4" y="9" width="10" height="4" fill="#ff0000"/><rect x="6" y="10" width="5" height="3" fill="#fff"/><rect x="12" y="9" width="2" height="4" fill="#ff0000"/><rect x="14" y="3" width="1" height="11" fill="#707070"/></g>
<g transform="translate(666,63)" ><rect x="5" y="0" width="9" height="8" fill="#fff"/><rect x="5.5" y="0.5" width="8" height="7" fill="#fff" stroke="#808080"/><rect x="5" y="0" width="9" height="2" fill="#000080"/><rect x="0.5" y="3.5" width="8" height="7" fill="#fff" stroke="#808080"/><rect x="0" y="3" width="9" height="2" fill="#000080"/><rect x="2" y="7" width="2" height="2" fill="#808080"/><rect x="5" y="7" width="2" height="2" fill="#808080"/><g shape-rendering="auto"><circle cx="10.5" cy="11" r="4.6" fill="#20b0d0" stroke="#003040" stroke-width="1"/><path d="M8 9.5 L11 8 L13 10 L11.5 12 L9.5 13 Z" fill="#c0c000"/></g></g>
<g transform="translate(690,63)" ><rect x="4" y="0" width="10" height="9" fill="#808060"/><rect x="5" y="1" width="8" height="6" fill="#0000e0"/><rect x="3" y="9" width="12" height="4" fill="#a0a080"/><rect x="8" y="13" width="6" height="2" fill="#000"/><rect x="4" y="10" width="6" height="1" fill="#404040"/><rect x="0" y="4" width="5" height="10" fill="#c0c0c0"/><rect x="1" y="7" width="3" height="4" fill="#0000c0"/><rect x="1" y="5" width="3" height="2" fill="#fff"/><rect x="1" y="11" width="3" height="3" fill="#fff"/><rect x="1" y="12" width="3" height="1" fill="#ff0000"/><rect x="0" y="3" width="2" height="1" fill="#000"/><rect x="4" y="3" width="1" height="1" fill="#000"/></g>
<rect x="5" y="88" width="1" height="20" fill="#a0a0a0"/><rect x="6" y="88" width="1" height="20" fill="#fff"/><rect x="4" y="107" width="1" height="1" fill="#a0a0a0"/>
<g transform="translate(11,90)" ><g shape-rendering="auto"><polygon points="7.2,3 4.6,10.6 8,13.2 14.8,10.4 14.8,7" fill="#a8a8a8"/><polygon points="8.6,5.2 6.6,10 8.3,11.6 10.2,7.2" fill="#f0f0f0"/><polygon points="7.4,2.9 10.5,0 12,0 12.7,1.4 13.8,1.4 14.9,1 15,7" fill="#ff0000"/><path d="M10.6 0 L7 3.2 L5.5 7.9 L4.4 10.6 M7.2 3 L14.8 7.1 L14.8 10.4 L8 13.2" fill="none" stroke="#000" stroke-width="1.2"/><polygon points="4.4,10.6 7.7,12.2 7.3,13.8 4,14" fill="#ff0000"/><path d="M0.3 12.2 L3.3 15.5 L4.6 13.6" fill="none" stroke="#000" stroke-width="1.1"/></g></g>
<rect x="35" y="96" width="14" height="1" fill="#000"/><rect x="36" y="92" width="1" height="12" fill="#000"/><rect x="41" y="92" width="1" height="12" fill="#000"/><rect x="45" y="92" width="1" height="12" fill="#000"/>
<g transform="translate(57,90)" ><rect x="0" y="2" width="15" height="1" fill="#000"/><rect x="2" y="0" width="1" height="5" fill="#000"/><rect x="6" y="0" width="1" height="5" fill="#000"/><rect x="9" y="0" width="1" height="5" fill="#000"/><rect x="13" y="0" width="1" height="5" fill="#000"/><text x="7.5" y="14.8" font-family="'Liberation Sans','Noto Sans CJK SC',sans-serif" font-size="10px" font-weight="500" fill="#808000" text-anchor="middle" shape-rendering="auto">金</text></g>
<g transform="translate(80,90)" ><rect x="0" y="2" width="15" height="1" fill="#000"/><rect x="2" y="0" width="1" height="5" fill="#000"/><rect x="6" y="0" width="1" height="5" fill="#000"/><rect x="9" y="0" width="1" height="5" fill="#000"/><rect x="13" y="0" width="1" height="5" fill="#000"/><text x="7.5" y="14.8" font-family="'Liberation Sans','Noto Sans CJK SC',sans-serif" font-size="10px" font-weight="500" fill="#808000" text-anchor="middle" shape-rendering="auto">金</text></g>
<g transform="translate(104,90)" ><rect x="0" y="2" width="15" height="1" fill="#000"/><rect x="2" y="0" width="1" height="5" fill="#000"/><rect x="6" y="0" width="1" height="5" fill="#000"/><rect x="9" y="0" width="1" height="5" fill="#000"/><rect x="13" y="0" width="1" height="5" fill="#000"/><rect x="5" y="6" width="1" height="9" fill="#000"/><rect x="5" y="6" width="6" height="1" fill="#000"/><rect x="5" y="10" width="5" height="1" fill="#000"/></g>
<g transform="translate(127,90)" ><rect x="0" y="2" width="15" height="1" fill="#000"/><rect x="2" y="0" width="1" height="5" fill="#000"/><rect x="6" y="0" width="1" height="5" fill="#000"/><rect x="9" y="0" width="1" height="5" fill="#000"/><rect x="13" y="0" width="1" height="5" fill="#000"/><path d="M3 5.5 H11 C15 6 15 11 11 13.5 C8 15.5 4 14.5 4 12 C4 9.5 8 9 9 11 C9.5 12 8 12.5 7.5 12" fill="none" stroke="#000" stroke-width="1.1" shape-rendering="auto"/></g>
<g transform="translate(150,90)" ><g transform="translate(1.5,-1.5) scale(0.9)"><g shape-rendering="auto"><polygon points="7.2,3 4.6,10.6 8,13.2 14.8,10.4 14.8,7" fill="#a8a8a8"/><polygon points="8.6,5.2 6.6,10 8.3,11.6 10.2,7.2" fill="#f0f0f0"/><polygon points="7.4,2.9 10.5,0 12,0 12.7,1.4 13.8,1.4 14.9,1 15,7" fill="#ff0000"/><path d="M10.6 0 L7 3.2 L5.5 7.9 L4.4 10.6 M7.2 3 L14.8 7.1 L14.8 10.4 L8 13.2" fill="none" stroke="#000" stroke-width="1.2"/><polygon points="4.4,10.6 7.7,12.2 7.3,13.8 4,14" fill="#ff0000"/><path d="M0.3 12.2 L3.3 15.5 L4.6 13.6" fill="none" stroke="#000" stroke-width="1.1"/></g></g><rect x="0" y="13" width="16" height="1" fill="#000"/><rect x="0" y="10" width="1" height="6" fill="#000"/><rect x="6" y="11" width="1" height="5" fill="#000"/><rect x="9" y="11" width="1" height="5" fill="#000"/><rect x="12" y="11" width="1" height="5" fill="#000"/><rect x="15" y="11" width="1" height="5" fill="#000"/></g>
<g transform="translate(172,90)" ><g shape-rendering="auto" fill="none" stroke="#000"><circle cx="8" cy="8" r="7.3" stroke-width="1.1"/><path d="M11 4 L15 0.5" stroke-width="1"/></g><rect x="1" y="8" width="14" height="1" fill="#000"/><rect x="3" y="6" width="1" height="5" fill="#000"/><rect x="5" y="6" width="1" height="5" fill="#000"/><rect x="7" y="6" width="1" height="5" fill="#000"/><rect x="9" y="6" width="1" height="5" fill="#000"/><rect x="11" y="6" width="1" height="5" fill="#000"/><rect x="13" y="6" width="1" height="5" fill="#000"/></g>
<rect x="195" y="96" width="16" height="1" fill="#000"/><rect x="197" y="92" width="1" height="12" fill="#000"/><rect x="201" y="92" width="1" height="12" fill="#000"/><rect x="205" y="92" width="1" height="12" fill="#000"/><rect x="209" y="92" width="1" height="12" fill="#000"/>
<g transform="translate(218,90)" ><rect x="0" y="2" width="15" height="1" fill="#000"/><rect x="2" y="0" width="1" height="5" fill="#000"/><rect x="6" y="0" width="1" height="5" fill="#000"/><rect x="9" y="0" width="1" height="5" fill="#000"/><rect x="13" y="0" width="1" height="5" fill="#000"/><text x="2" y="15" font-family="'Liberation Sans','Noto Sans CJK SC',sans-serif" font-size="11px" fill="#000" shape-rendering="auto">n</text><text x="9" y="11" font-family="'Liberation Sans','Noto Sans CJK SC',sans-serif" font-size="7px" fill="#000" shape-rendering="auto">2</text></g>
<g transform="translate(241,90)" ><g shape-rendering="auto" fill="none" stroke="#000" stroke-width="1"><path d="M0.5 14.5 L8 1 L8 14.5 M2 14 L13.5 7.5 L8 3"/><path d="M10.5 0 V15.5 M14.5 0 V15.5" stroke="#808080"/></g></g>
<g transform="translate(264,89)" ><g shape-rendering="auto" fill="none" stroke="#000" stroke-width="1.1"><path d="M14.5 5 A7 7 0 1 0 8 15"/><circle cx="7.5" cy="8.5" r="2.2"/></g><rect x="0" y="9" width="16" height="1" fill="#ff0000"/><rect x="7" y="0" width="1" height="16" fill="#ff0000"/></g>
<g transform="translate(287,90)" ><g shape-rendering="auto" fill="none"><circle cx="8" cy="8" r="6.5" stroke="#808080" stroke-width="0.8"/><circle cx="8" cy="8" r="4" stroke="#808080" stroke-width="0.8"/><path d="M3 3 L13 13 M13 3 L3 13" stroke="#409090" stroke-width="0.8"/></g><rect x="1" y="8" width="14" height="1" fill="#ff0000"/><rect x="8" y="1" width="1" height="14" fill="#ff0000"/><rect x="2" y="2" width="1" height="1" fill="#008080"/><rect x="13" y="2" width="1" height="1" fill="#008080"/><rect x="2" y="13" width="1" height="1" fill="#008080"/><rect x="13" y="13" width="1" height="1" fill="#008080"/><rect x="5" y="1" width="1" height="1" fill="#008080"/><rect x="10" y="1" width="1" height="1" fill="#008080"/><rect x="5" y="14" width="1" height="1" fill="#008080"/><rect x="10" y="14" width="1" height="1" fill="#008080"/></g>
<g transform="translate(310,90)" ><g fill="none" stroke="#808080" stroke-width="1"><rect x="1.5" y="1.5" width="12" height="12"/><rect x="3.5" y="3.5" width="8" height="8"/><rect x="5.5" y="5.5" width="4" height="4"/></g><rect x="0" y="7" width="15" height="1" fill="#008080"/><rect x="7" y="0" width="1" height="15" fill="#008080"/><path d="M1 1 L14 14 M14 1 L1 14" stroke="#c08080" stroke-width="0.8" shape-rendering="auto"/><rect x="0" y="0" width="1" height="1" fill="#ff0000"/><rect x="14" y="0" width="1" height="1" fill="#ff0000"/><rect x="0" y="14" width="1" height="1" fill="#ff0000"/><rect x="14" y="14" width="1" height="1" fill="#ff0000"/><rect x="7" y="7" width="1" height="1" fill="#ff0000"/><rect x="7" y="14" width="1" height="1" fill="#ff0000"/><rect x="7" y="0" width="1" height="1" fill="#ff0000"/><rect x="0" y="7" width="1" height="1" fill="#ff0000"/><rect x="14" y="7" width="1" height="1" fill="#ff0000"/><rect x="7" y="6" width="1" height="3" fill="#ff0000"/><rect x="6" y="7" width="3" height="1" fill="#ff0000"/></g>
<g transform="translate(333,90)" ><rect x="1" y="1" width="1" height="14" fill="#000"/><rect x="7" y="1" width="1" height="14" fill="#000"/><path d="M1.5 13 L7.5 3" stroke="#000" stroke-width="1.2" shape-rendering="auto"/><rect x="10" y="1" width="1" height="3" fill="#000"/><rect x="13" y="1" width="1" height="3" fill="#000"/></g>
<g transform="translate(356,90)" ><rect x="0" y="3" width="16" height="1" fill="#000"/><rect x="1" y="0" width="1" height="7" fill="#000"/><rect x="15" y="0" width="1" height="7" fill="#000"/><rect x="5" y="1" width="1" height="4" fill="#000"/><rect x="10" y="1" width="1" height="4" fill="#000"/><text x="8" y="15.5" font-family="'Liberation Sans','Noto Sans CJK SC',sans-serif" font-size="10.5px" font-weight="bold" fill="#ff0000" text-anchor="middle" shape-rendering="auto">神</text></g>
<g transform="translate(379,90)" ><rect x="0" y="3" width="16" height="1" fill="#000"/><rect x="1" y="0" width="1" height="7" fill="#000"/><rect x="15" y="0" width="1" height="7" fill="#000"/><rect x="5" y="1" width="1" height="4" fill="#000"/><rect x="10" y="1" width="1" height="4" fill="#000"/><text x="8" y="15.5" font-family="'Liberation Sans','Noto Sans CJK SC',sans-serif" font-size="10.5px" font-weight="bold" fill="#ff0000" text-anchor="middle" shape-rendering="auto">赢</text></g>
<g transform="translate(402,90)" ><rect x="1" y="1" width="14" height="1" fill="#000"/><rect x="1" y="1" width="1" height="14" fill="#000"/><rect x="0" y="14" width="4" height="1" fill="#000"/><rect x="3" y="2" width="1" height="3" fill="#000"/><rect x="5" y="2" width="1" height="3" fill="#000"/><rect x="7" y="2" width="1" height="3" fill="#000"/><rect x="9" y="2" width="1" height="3" fill="#000"/><rect x="11" y="2" width="1" height="3" fill="#000"/><rect x="13" y="2" width="1" height="3" fill="#000"/><rect x="3" y="6" width="1" height="1" fill="#000"/><rect x="5" y="6" width="1" height="1" fill="#000"/><rect x="7" y="6" width="1" height="1" fill="#000"/><rect x="9" y="6" width="1" height="1" fill="#000"/><rect x="11" y="6" width="1" height="1" fill="#000"/><rect x="13" y="6" width="1" height="1" fill="#000"/><rect x="3" y="9" width="1" height="1" fill="#000"/><rect x="5" y="9" width="1" height="1" fill="#000"/><rect x="7" y="9" width="1" height="1" fill="#000"/><rect x="9" y="9" width="1" height="1" fill="#000"/><rect x="11" y="9" width="1" height="1" fill="#000"/><rect x="13" y="9" width="1" height="1" fill="#000"/><rect x="3" y="8" width="1" height="1" fill="#000"/><rect x="4" y="8" width="1" height="1" fill="#000"/><rect x="6" y="8" width="1" height="1" fill="#000"/><rect x="7" y="8" width="1" height="1" fill="#000"/><rect x="8" y="8" width="1" height="1" fill="#000"/><rect x="10" y="8" width="1" height="1" fill="#000"/><rect x="11" y="8" width="1" height="1" fill="#000"/><rect x="12" y="8" width="1" height="1" fill="#000"/><rect x="14" y="8" width="1" height="1" fill="#000"/><text x="5" y="16" font-family="'Liberation Sans','Noto Sans CJK SC',sans-serif" font-size="6px" font-weight="bold" fill="#000" shape-rendering="auto" textLength="10" lengthAdjust="spacingAndGlyphs">123</text></g>
<g transform="translate(425,90)" ><rect x="0" y="2" width="1" height="12" fill="#000"/><rect x="14" y="2" width="1" height="12" fill="#000"/><rect x="7" y="0" width="1" height="16" fill="#000"/><rect x="1" y="7" width="13" height="1" fill="#000"/><rect x="2" y="6" width="1" height="3" fill="#000"/><rect x="3" y="5" width="1" height="5" fill="#000"/><rect x="12" y="6" width="1" height="3" fill="#000"/><rect x="11" y="5" width="1" height="5" fill="#000"/></g>
<rect x="446" y="87" width="1" height="22" fill="#a0a0a0"/><rect x="447" y="87" width="1" height="22" fill="#fff"/>
<rect x="452" y="88" width="1" height="20" fill="#a0a0a0"/><rect x="453" y="88" width="1" height="20" fill="#fff"/><rect x="451" y="107" width="1" height="1" fill="#a0a0a0"/>
<g transform="translate(458,90)" ><rect x="5.5" y="1.5" width="9" height="9" fill="none" stroke="#000" stroke-width="1"/><rect x="6.5" y="2.5" width="7" height="7" fill="none" stroke="#606060" stroke-width="1" stroke-opacity="0.5"/><rect x="1" y="1" width="1" height="10" fill="#808080"/><rect x="0" y="1" width="3" height="1" fill="#808080"/><rect x="0" y="10" width="3" height="1" fill="#808080"/><rect x="0" y="5" width="3" height="1" fill="#808080"/><rect x="5" y="13" width="10" height="1" fill="#808080"/><rect x="5" y="12" width="1" height="3" fill="#808080"/><rect x="14" y="12" width="1" height="3" fill="#808080"/><rect x="9" y="12" width="1" height="3" fill="#808080"/></g>
<g transform="translate(481,90)" ><g shape-rendering="auto" fill="none" stroke-width="1.1"><path d="M1 15 L4 0.5" stroke="#800000"/><path d="M1 15 L8.5 0.5" stroke="#ff0000"/><path d="M1 15 L15.5 0.5" stroke="#000"/><path d="M1 15 L15.5 7" stroke="#ff0000"/><path d="M1 15 L15.5 12.5" stroke="#800000"/></g><rect x="0" y="13" width="3" height="3" fill="#c00000"/></g>
<g transform="translate(504,90)" ><rect x="1.5" y="3.5" width="12" height="12" fill="none" stroke="#000" stroke-width="1"/><g shape-rendering="auto" fill="none" stroke-width="1.1"><path d="M1 15 L15.5 0.5" stroke="#ff0000" stroke-width="1.6"/><path d="M1 15 L4.5 0.5 M1 15 L15.5 11" stroke="#800080"/><path d="M1 15 L9.5 0.5 M1 15 L15.5 6" stroke="#800000"/></g></g>
<g transform="translate(527,90)" ><rect x="1.5" y="1.5" width="12" height="12" fill="none" stroke="#000" stroke-width="1"/><g shape-rendering="auto" fill="none" stroke-width="1.1"><path d="M1 1 L15.5 15.5" stroke="#ff0000" stroke-width="1.6"/><path d="M1 1 L4.5 15.5 M1 1 L15.5 4.5" stroke="#800080"/><path d="M1 1 L10 15.5 M1 1 L15.5 10" stroke="#800000"/></g></g>
<g transform="translate(550,90)" ><g shape-rendering="auto" fill="none" stroke="#000" stroke-width="1.1"><path d="M0.5 15 L15 0.5 M0.5 15 L15 7.5 M3 14.5 L15 11"/></g><rect x="0" y="14" width="3" height="2" fill="#000"/></g>
<g transform="translate(573,90)" ><path d="M0.5 2 L6.5 14 L11 6 L14.5 10" fill="none" stroke="#000" stroke-width="1.1" shape-rendering="auto"/><rect x="0" y="14" width="1" height="1" fill="#606060"/><rect x="2" y="14" width="1" height="1" fill="#606060"/><rect x="4" y="14" width="1" height="1" fill="#606060"/><rect x="6" y="14" width="1" height="1" fill="#606060"/><rect x="8" y="14" width="1" height="1" fill="#606060"/><rect x="10" y="14" width="1" height="1" fill="#606060"/><rect x="12" y="14" width="1" height="1" fill="#606060"/><rect x="14" y="14" width="1" height="1" fill="#606060"/></g>
<g transform="translate(596,90)" ><rect x="0" y="0" width="15" height="15" fill="#fff"/><rect x="0" y="0" width="1" height="15" fill="#909090"/><rect x="0" y="0" width="15" height="1" fill="#909090"/><rect x="4" y="0" width="1" height="15" fill="#909090"/><rect x="0" y="4" width="15" height="1" fill="#909090"/><rect x="7" y="0" width="1" height="15" fill="#909090"/><rect x="0" y="7" width="15" height="1" fill="#909090"/><rect x="10" y="0" width="1" height="15" fill="#909090"/><rect x="0" y="10" width="15" height="1" fill="#909090"/><rect x="14" y="0" width="1" height="15" fill="#909090"/><rect x="0" y="14" width="15" height="1" fill="#909090"/><rect x="0" y="0" width="1" height="1" fill="#ff0000"/><rect x="0" y="4" width="1" height="1" fill="#ff0000"/><rect x="0" y="7" width="1" height="1" fill="#ff0000"/><rect x="0" y="10" width="1" height="1" fill="#ff0000"/><rect x="4" y="0" width="1" height="1" fill="#ff0000"/><rect x="4" y="4" width="1" height="1" fill="#ff0000"/><rect x="4" y="14" width="1" height="1" fill="#ff0000"/><rect x="7" y="0" width="1" height="1" fill="#ff0000"/><rect x="7" y="7" width="1" height="1" fill="#ff0000"/><rect x="7" y="14" width="1" height="1" fill="#ff0000"/><rect x="10" y="0" width="1" height="1" fill="#ff0000"/><rect x="10" y="10" width="1" height="1" fill="#ff0000"/><rect x="10" y="14" width="1" height="1" fill="#ff0000"/><rect x="14" y="4" width="1" height="1" fill="#ff0000"/><rect x="14" y="7" width="1" height="1" fill="#ff0000"/><rect x="14" y="10" width="1" height="1" fill="#ff0000"/><rect x="14" y="14" width="1" height="1" fill="#ff0000"/><rect x="7" y="0" width="1" height="15" fill="#c04040"/><rect x="0" y="7" width="15" height="1" fill="#c04040"/></g>
<g transform="translate(619,90)" ><g transform="translate(2,0) scale(0.87)"><rect x="0" y="0" width="15" height="15" fill="#fff"/><rect x="0" y="0" width="1" height="15" fill="#909090"/><rect x="0" y="0" width="15" height="1" fill="#909090"/><rect x="4" y="0" width="1" height="15" fill="#909090"/><rect x="0" y="4" width="15" height="1" fill="#909090"/><rect x="7" y="0" width="1" height="15" fill="#909090"/><rect x="0" y="7" width="15" height="1" fill="#909090"/><rect x="10" y="0" width="1" height="15" fill="#909090"/><rect x="0" y="10" width="15" height="1" fill="#909090"/><rect x="14" y="0" width="1" height="15" fill="#909090"/><rect x="0" y="14" width="15" height="1" fill="#909090"/><rect x="0" y="0" width="1" height="1" fill="#ff0000"/><rect x="0" y="4" width="1" height="1" fill="#ff0000"/><rect x="0" y="7" width="1" height="1" fill="#ff0000"/><rect x="0" y="10" width="1" height="1" fill="#ff0000"/><rect x="4" y="0" width="1" height="1" fill="#ff0000"/><rect x="4" y="4" width="1" height="1" fill="#ff0000"/><rect x="4" y="14" width="1" height="1" fill="#ff0000"/><rect x="7" y="0" width="1" height="1" fill="#ff0000"/><rect x="7" y="7" width="1" height="1" fill="#ff0000"/><rect x="7" y="14" width="1" height="1" fill="#ff0000"/><rect x="10" y="0" width="1" height="1" fill="#ff0000"/><rect x="10" y="10" width="1" height="1" fill="#ff0000"/><rect x="10" y="14" width="1" height="1" fill="#ff0000"/><rect x="14" y="4" width="1" height="1" fill="#ff0000"/><rect x="14" y="7" width="1" height="1" fill="#ff0000"/><rect x="14" y="10" width="1" height="1" fill="#ff0000"/><rect x="14" y="14" width="1" height="1" fill="#ff0000"/><rect x="7" y="0" width="1" height="15" fill="#c04040"/><rect x="0" y="7" width="15" height="1" fill="#c04040"/></g><rect x="0" y="0" width="1" height="15" fill="#000"/><rect x="0" y="14" width="15" height="1" fill="#000"/><rect x="13" y="13" width="1" height="3" fill="#000"/><rect x="0" y="0" width="2" height="1" fill="#000"/></g>
<g transform="translate(642,90)" ><g shape-rendering="auto" fill="none" stroke="#404040" stroke-width="1"><path d="M0.5 7 L14.5 0.5 M0.5 11 L14.5 4.5 M0.5 15 L14.5 8.5"/></g><rect x="1" y="4" width="1" height="12" fill="#606060"/><rect x="11" y="1" width="1" height="14" fill="#606060"/></g>
<rect x="664" y="87" width="1" height="22" fill="#a0a0a0"/><rect x="665" y="87" width="1" height="22" fill="#fff"/>
<rect x="669" y="88" width="1" height="20" fill="#a0a0a0"/><rect x="670" y="88" width="1" height="20" fill="#fff"/><rect x="668" y="107" width="1" height="1" fill="#a0a0a0"/>
<g transform="translate(676,90)" ><rect x="10" y="0" width="1" height="16" fill="#000"/><rect x="0" y="1" width="10" height="1" fill="#000"/><rect x="0" y="4" width="10" height="1" fill="#000"/><rect x="0" y="7" width="10" height="1" fill="#000"/><rect x="0" y="10" width="10" height="1" fill="#000"/><rect x="0" y="13" width="10" height="1" fill="#000"/><rect x="0" y="1" width="1" height="13" fill="#000"/><rect x="12" y="2" width="2" height="1" fill="#000"/><rect x="12" y="5" width="2" height="1" fill="#000"/><rect x="12" y="10" width="2" height="1" fill="#000"/><rect x="12" y="13" width="2" height="2" fill="#000"/></g>
<g transform="translate(698,90)" ><rect x="0" y="0" width="16" height="1" fill="#ff0000"/><rect x="0" y="15" width="6" height="1" fill="#ff0000"/><path d="M2 15 L7 1 H13 M9 1 L12 5 L15 1" fill="none" stroke="#000" stroke-width="1" shape-rendering="auto"/><text x="7" y="16" font-family="'Liberation Sans','Noto Sans CJK SC',sans-serif" font-size="10px" fill="#ff0000" shape-rendering="auto" textLength="9" lengthAdjust="spacingAndGlyphs">%</text></g>
<text x="722" y="104" font-family="'Liberation Sans','Noto Sans CJK SC',sans-serif" font-size="15px" fill="#000" shape-rendering="auto" textLength="13" lengthAdjust="spacingAndGlyphs">%</text>
<g transform="translate(744,90)" ><rect x="0" y="0" width="16" height="1" fill="#000"/><rect x="0" y="15" width="16" height="1" fill="#000"/><rect x="8" y="3" width="8" height="1" fill="#000"/><rect x="10" y="8" width="6" height="1" fill="#000"/><text x="0" y="13.5" font-family="'Liberation Sans','Noto Sans CJK SC',sans-serif" font-size="10px" fill="#ff0000" shape-rendering="auto" textLength="9" lengthAdjust="spacingAndGlyphs">%</text></g>
<g transform="translate(767,90)" ><circle cx="8" cy="8" r="7.5" fill="#fff" stroke="#a0a0a0" stroke-width="1" shape-rendering="auto"/><text x="8" y="12" font-family="'Liberation Sans','Noto Sans CJK SC',sans-serif" font-size="10.5px" font-weight="500" fill="#808000" text-anchor="middle" shape-rendering="auto">金</text></g>
<g transform="translate(789,90)" ><rect x="0" y="0" width="16" height="1" fill="#000"/><rect x="0" y="15" width="16" height="1" fill="#000"/><rect x="7" y="4" width="9" height="1" fill="#000"/><rect x="9" y="8" width="7" height="1" fill="#000"/><rect x="8" y="12" width="8" height="1" fill="#000"/><text x="0" y="14" font-family="'Liberation Sans','Noto Sans CJK SC',sans-serif" font-size="10px" font-weight="500" fill="#808000" shape-rendering="auto">金</text></g>
<g transform="translate(813,90)" ><rect x="2" y="0" width="1" height="16" fill="#000"/><rect x="0" y="2" width="5" height="1" fill="#000"/><rect x="0" y="5" width="5" height="1" fill="#000"/><rect x="0" y="8" width="5" height="1" fill="#000"/><rect x="0" y="11" width="5" height="1" fill="#000"/><rect x="0" y="15" width="5" height="1" fill="#000"/><g transform="translate(4,1) scale(0.82)"><g shape-rendering="auto"><polygon points="7.2,3 4.6,10.6 8,13.2 14.8,10.4 14.8,7" fill="#a8a8a8"/><polygon points="8.6,5.2 6.6,10 8.3,11.6 10.2,7.2" fill="#f0f0f0"/><polygon points="7.4,2.9 10.5,0 12,0 12.7,1.4 13.8,1.4 14.9,1 15,7" fill="#ff0000"/><path d="M10.6 0 L7 3.2 L5.5 7.9 L4.4 10.6 M7.2 3 L14.8 7.1 L14.8 10.4 L8 13.2" fill="none" stroke="#000" stroke-width="1.2"/><polygon points="4.4,10.6 7.7,12.2 7.3,13.8 4,14" fill="#ff0000"/><path d="M0.3 12.2 L3.3 15.5 L4.6 13.6" fill="none" stroke="#000" stroke-width="1.1"/></g></g></g>
<g transform="translate(836,90)" ><rect x="0" y="0" width="16" height="1" fill="#ff0000"/><rect x="0" y="15" width="16" height="1" fill="#ff0000"/><rect x="0" y="7" width="16" height="1" fill="#606060"/><path d="M0.5 13 C2 2 4 2 6 7.5 C8 14 10 14 12 7.5 C13 3 14 2 15.5 2" fill="none" stroke="#808080" stroke-width="1" shape-rendering="auto"/></g>
<g transform="translate(859,90)" ><rect x="0" y="0" width="16" height="1" fill="#ff0000"/><rect x="0" y="15" width="16" height="1" fill="#ff0000"/><text x="8" y="13" font-family="'Liberation Sans','Noto Sans CJK SC',sans-serif" font-size="11px" font-weight="500" fill="#808000" text-anchor="middle" shape-rendering="auto">金</text></g>
<g transform="translate(882,90)" ><path d="M0.5 15.5 L15.5 0.5" stroke="#000" stroke-width="1.2" fill="none" shape-rendering="auto"/><rect x="1" y="14" width="15" height="1" fill="#000"/><rect x="5" y="11" width="11" height="1" fill="#000"/><rect x="9" y="7" width="7" height="1" fill="#000"/><rect x="14" y="2" width="2" height="1" fill="#000"/><text x="0" y="9.5" font-family="'Liberation Sans','Noto Sans CJK SC',sans-serif" font-size="12.5px" fill="#ff0000" shape-rendering="auto">J</text></g>
<g transform="translate(905,90)" ><path d="M0.5 15.5 L15.5 0.5" stroke="#000" stroke-width="1.2" fill="none" shape-rendering="auto"/><rect x="1" y="14" width="15" height="1" fill="#000"/><rect x="5" y="11" width="11" height="1" fill="#000"/><rect x="9" y="7" width="7" height="1" fill="#000"/><rect x="14" y="2" width="2" height="1" fill="#000"/><text x="0" y="9.5" font-family="'Liberation Sans','Noto Sans CJK SC',sans-serif" font-size="12.5px" font-weight="bold" fill="#ff0000" shape-rendering="auto">F</text></g>
<g transform="translate(928,90)" ><path d="M0.5 15.5 L15.5 0.5" stroke="#000" stroke-width="1.2" fill="none" shape-rendering="auto"/><rect x="1" y="14" width="15" height="1" fill="#000"/><rect x="5" y="11" width="11" height="1" fill="#000"/><rect x="9" y="7" width="7" height="1" fill="#000"/><rect x="14" y="2" width="2" height="1" fill="#000"/><text x="0" y="9" font-family="'Liberation Sans','Noto Sans CJK SC',sans-serif" font-size="10px" font-weight="bold" fill="#808000" shape-rendering="auto">金</text></g>
<g transform="translate(951,90)" ><path d="M0.5 15.5 L15.5 0.5" stroke="#000" stroke-width="1.2" fill="none" shape-rendering="auto"/><rect x="1" y="14" width="15" height="1" fill="#000"/><rect x="5" y="11" width="11" height="1" fill="#000"/><rect x="9" y="7" width="7" height="1" fill="#000"/><rect x="14" y="2" width="2" height="1" fill="#000"/><text x="0" y="9" font-family="'Liberation Sans','Noto Sans CJK SC',sans-serif" font-size="10px" font-weight="bold" fill="#ff0000" shape-rendering="auto">神</text></g>
<g transform="translate(974,90)" ><path d="M0.5 15.5 L15.5 0.5" stroke="#000" stroke-width="1.2" fill="none" shape-rendering="auto"/><rect x="1" y="14" width="15" height="1" fill="#000"/><rect x="5" y="11" width="11" height="1" fill="#000"/><rect x="9" y="7" width="7" height="1" fill="#000"/><rect x="14" y="2" width="2" height="1" fill="#000"/><text x="0" y="9" font-family="'Liberation Sans','Noto Sans CJK SC',sans-serif" font-size="10px" font-weight="bold" fill="#ff0000" shape-rendering="auto">赢</text></g>
<g transform="translate(997,90)" ><path d="M0.5 15.5 L15.5 0.5" stroke="#000" stroke-width="1.2" fill="none" shape-rendering="auto"/><rect x="1" y="14" width="15" height="1" fill="#000"/><rect x="5" y="11" width="11" height="1" fill="#000"/><rect x="9" y="7" width="7" height="1" fill="#000"/><rect x="14" y="2" width="2" height="1" fill="#000"/><text x="0" y="9" font-family="'Liberation Sans','Noto Sans CJK SC',sans-serif" font-size="10px" font-weight="bold" fill="#ff0000" shape-rendering="auto">四</text></g>
</svg>
</body></html>
